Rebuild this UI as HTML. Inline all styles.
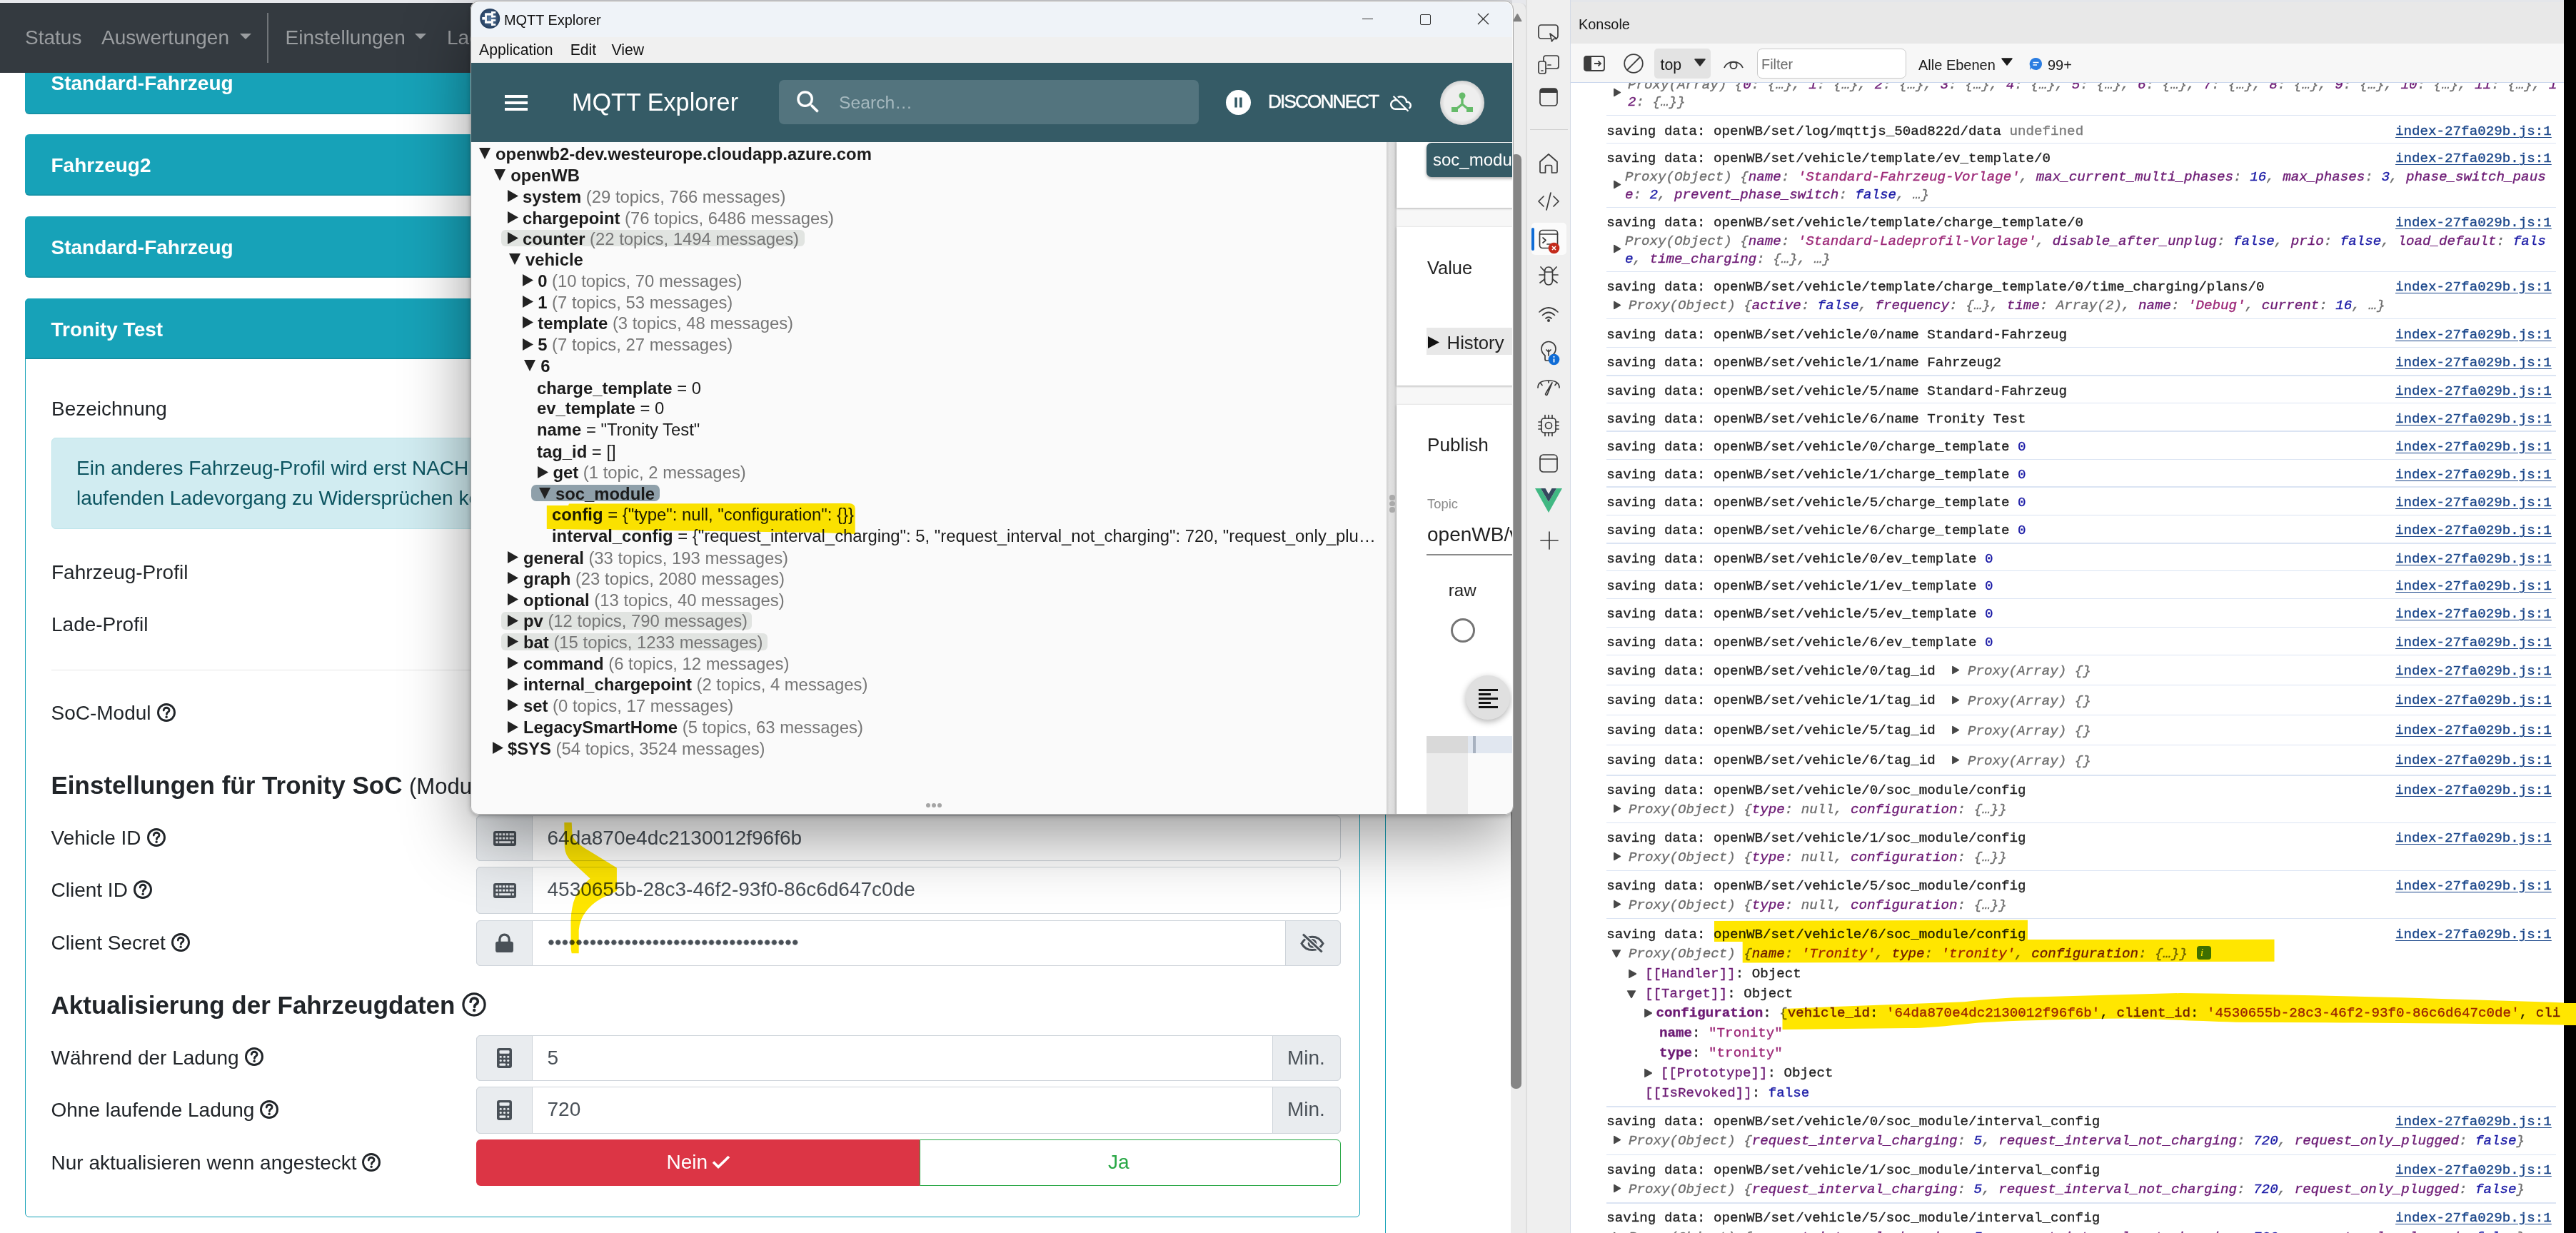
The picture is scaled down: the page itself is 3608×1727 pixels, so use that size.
<!DOCTYPE html>
<html lang="de"><head><meta charset="utf-8"><title>openWB Fahrzeug-Konfiguration – MQTT Explorer – DevTools</title>
<style>
html,body{margin:0;padding:0;width:3608px;height:1727px;overflow:hidden;background:#fff;font-family:"Liberation Sans",sans-serif;}
.a{position:absolute;white-space:pre;}
svg.a{overflow:visible}
</style></head><body>
<div class="a" style="left:0.0px;top:0.0px;width:3591.0px;height:4.0px;background:#e7e8ec;"></div>
<div class="a" style="left:35.0px;top:60.0px;width:1870.0px;height:99.5px;background:#17a2b8;border-radius:6px;box-shadow:inset 0 -1.5px 0 rgba(0,0,0,.13);"></div>
<div class="a" style="left:71.5px;top:98.7px;font-size:28px;line-height:35px;color:#fff;font-weight:700;">Standard-Fahrzeug</div>
<div class="a" style="left:35.0px;top:187.8px;width:1870.0px;height:86.7px;background:#17a2b8;border-radius:6px;box-shadow:inset 0 -1.5px 0 rgba(0,0,0,.13);"></div>
<div class="a" style="left:71.5px;top:214.3px;font-size:28px;line-height:35px;color:#fff;font-weight:700;">Fahrzeug2</div>
<div class="a" style="left:35.0px;top:303.0px;width:1870.0px;height:86.3px;background:#17a2b8;border-radius:6px;box-shadow:inset 0 -1.5px 0 rgba(0,0,0,.13);"></div>
<div class="a" style="left:71.5px;top:329.0px;font-size:28px;line-height:35px;color:#fff;font-weight:700;">Standard-Fahrzeug</div>
<div class="a" style="left:0.0px;top:4.0px;width:2116.0px;height:97.5px;background:#343a40;"></div>
<div class="a" style="left:35.0px;top:35.0px;font-size:28px;line-height:35px;color:#9a9da0;">Status</div>
<div class="a" style="left:142.0px;top:35.0px;font-size:28px;line-height:35px;color:#9a9da0;">Auswertungen</div>
<svg class="a" style="left:336px;top:47px" width="16" height="8"><path d="M0 0H16L8 8Z" fill="#9a9da0"/></svg>
<div class="a" style="left:374.0px;top:18.0px;width:1.5px;height:69.5px;background:rgba(255,255,255,.3);"></div>
<div class="a" style="left:399.6px;top:35.0px;font-size:28px;line-height:35px;color:#9a9da0;">Einstellungen</div>
<svg class="a" style="left:581px;top:47px" width="16" height="8"><path d="M0 0H16L8 8Z" fill="#9a9da0"/></svg>
<div class="a" style="left:626.0px;top:35.0px;font-size:28px;line-height:35px;color:#9a9da0;">Ladepunkte</div>
<div class="a" style="left:35.0px;top:417.7px;width:1870.0px;height:1287.3px;background:#fff;border:1.5px solid #17a2b8;border-radius:6px;box-sizing:border-box;"></div>
<div class="a" style="left:35.0px;top:417.7px;width:1870.0px;height:85.3px;background:#17a2b8;border-radius:6px 6px 0 0;box-shadow:inset 0 -1.5px 0 rgba(0,0,0,.13);"></div>
<div class="a" style="left:71.5px;top:443.5px;font-size:28px;line-height:35px;color:#fff;font-weight:700;">Tronity Test</div>
<div class="a" style="left:1939.5px;top:101.5px;width:1.5px;height:1625.5px;background:#17a2b8;"></div>
<div class="a" style="left:72.0px;top:554.6px;font-size:28px;line-height:35px;color:#212529;">Bezeichnung</div>
<div class="a" style="left:71.5px;top:613.0px;width:1796.5px;height:128.0px;background:#d1ecf1;border:1.5px solid #bee5eb;border-radius:6px;box-sizing:border-box;"></div>
<div class="a" style="left:107.0px;top:638.0px;font-size:28px;line-height:35px;color:#0c5460;">Ein anderes Fahrzeug-Profil wird erst NACH dem Abstecken übernommen, um</div>
<div class="a" style="left:107.0px;top:679.7px;font-size:28px;line-height:35px;color:#0c5460;">laufenden Ladevorgang zu Widersprüchen kommen kann.</div>
<div class="a" style="left:72.0px;top:784.4px;font-size:28px;line-height:35px;color:#212529;">Fahrzeug-Profil</div>
<div class="a" style="left:72.0px;top:857.4px;font-size:28px;line-height:35px;color:#212529;">Lade-Profil</div>
<div class="a" style="left:71.5px;top:937.5px;width:1796.5px;height:1.5px;background:rgba(0,0,0,.1);"></div>
<div class="a" style="left:71.5px;top:981.0px;font-size:28px;line-height:35px;color:#212529;">SoC-Modul</div>
<svg class="a" style="left:220.0px;top:985.0px" width="26" height="26" viewBox="0 0 16 16"><circle cx="8" cy="8" r="7.1" fill="none" stroke="#212529" stroke-width="1.78"/><path d="M5.7 6.2c0-1.4 1.05-2.35 2.4-2.35 1.4 0 2.4.9 2.4 2.1 0 1-.6 1.45-1.3 1.9-.6.4-.9.7-.9 1.4v.3" fill="none" stroke="#212529" stroke-width="1.75" stroke-linecap="round"/><circle cx="8.1" cy="11.8" r="1.05" fill="#212529"/></svg>
<div class="a" style="left:71.5px;top:1077.5px;font-size:35px;line-height:44px;color:#212529;font-weight:700;">Einstellungen für Tronity SoC</div>
<div class="a" style="left:573.0px;top:1082.0px;font-size:31px;line-height:39px;color:#212529;">(Modul: soc_tronity)</div>
<div class="a" style="left:71.5px;top:1156.0px;font-size:28px;line-height:35px;color:#212529;">Vehicle ID</div>
<svg class="a" style="left:206.0px;top:1159.5px" width="26" height="26" viewBox="0 0 16 16"><circle cx="8" cy="8" r="7.1" fill="none" stroke="#212529" stroke-width="1.78"/><path d="M5.7 6.2c0-1.4 1.05-2.35 2.4-2.35 1.4 0 2.4.9 2.4 2.1 0 1-.6 1.45-1.3 1.9-.6.4-.9.7-.9 1.4v.3" fill="none" stroke="#212529" stroke-width="1.75" stroke-linecap="round"/><circle cx="8.1" cy="11.8" r="1.05" fill="#212529"/></svg>
<div class="a" style="left:71.5px;top:1229.0px;font-size:28px;line-height:35px;color:#212529;">Client ID</div>
<svg class="a" style="left:187.0px;top:1233.0px" width="26" height="26" viewBox="0 0 16 16"><circle cx="8" cy="8" r="7.1" fill="none" stroke="#212529" stroke-width="1.78"/><path d="M5.7 6.2c0-1.4 1.05-2.35 2.4-2.35 1.4 0 2.4.9 2.4 2.1 0 1-.6 1.45-1.3 1.9-.6.4-.9.7-.9 1.4v.3" fill="none" stroke="#212529" stroke-width="1.75" stroke-linecap="round"/><circle cx="8.1" cy="11.8" r="1.05" fill="#212529"/></svg>
<div class="a" style="left:71.5px;top:1303.0px;font-size:28px;line-height:35px;color:#212529;">Client Secret</div>
<svg class="a" style="left:240.0px;top:1307.0px" width="26" height="26" viewBox="0 0 16 16"><circle cx="8" cy="8" r="7.1" fill="none" stroke="#212529" stroke-width="1.78"/><path d="M5.7 6.2c0-1.4 1.05-2.35 2.4-2.35 1.4 0 2.4.9 2.4 2.1 0 1-.6 1.45-1.3 1.9-.6.4-.9.7-.9 1.4v.3" fill="none" stroke="#212529" stroke-width="1.75" stroke-linecap="round"/><circle cx="8.1" cy="11.8" r="1.05" fill="#212529"/></svg>
<div class="a" style="left:71.5px;top:1385.9px;font-size:35px;line-height:44px;color:#212529;font-weight:700;">Aktualisierung der Fahrzeugdaten</div>
<svg class="a" style="left:646.5px;top:1389.5px" width="34" height="34" viewBox="0 0 16 16"><circle cx="8" cy="8" r="7.1" fill="none" stroke="#212529" stroke-width="1.51"/><path d="M5.7 6.2c0-1.4 1.05-2.35 2.4-2.35 1.4 0 2.4.9 2.4 2.1 0 1-.6 1.45-1.3 1.9-.6.4-.9.7-.9 1.4v.3" fill="none" stroke="#212529" stroke-width="1.75" stroke-linecap="round"/><circle cx="8.1" cy="11.8" r="1.05" fill="#212529"/></svg>
<div class="a" style="left:71.5px;top:1463.5px;font-size:28px;line-height:35px;color:#212529;">Während der Ladung</div>
<svg class="a" style="left:343.0px;top:1467.0px" width="26" height="26" viewBox="0 0 16 16"><circle cx="8" cy="8" r="7.1" fill="none" stroke="#212529" stroke-width="1.78"/><path d="M5.7 6.2c0-1.4 1.05-2.35 2.4-2.35 1.4 0 2.4.9 2.4 2.1 0 1-.6 1.45-1.3 1.9-.6.4-.9.7-.9 1.4v.3" fill="none" stroke="#212529" stroke-width="1.75" stroke-linecap="round"/><circle cx="8.1" cy="11.8" r="1.05" fill="#212529"/></svg>
<div class="a" style="left:71.5px;top:1537.0px;font-size:28px;line-height:35px;color:#212529;">Ohne laufende Ladung</div>
<svg class="a" style="left:364.0px;top:1541.0px" width="26" height="26" viewBox="0 0 16 16"><circle cx="8" cy="8" r="7.1" fill="none" stroke="#212529" stroke-width="1.78"/><path d="M5.7 6.2c0-1.4 1.05-2.35 2.4-2.35 1.4 0 2.4.9 2.4 2.1 0 1-.6 1.45-1.3 1.9-.6.4-.9.7-.9 1.4v.3" fill="none" stroke="#212529" stroke-width="1.75" stroke-linecap="round"/><circle cx="8.1" cy="11.8" r="1.05" fill="#212529"/></svg>
<div class="a" style="left:71.5px;top:1610.8px;font-size:28px;line-height:35px;color:#212529;">Nur aktualisieren wenn angesteckt</div>
<svg class="a" style="left:507.0px;top:1614.5px" width="26" height="26" viewBox="0 0 16 16"><circle cx="8" cy="8" r="7.1" fill="none" stroke="#212529" stroke-width="1.78"/><path d="M5.7 6.2c0-1.4 1.05-2.35 2.4-2.35 1.4 0 2.4.9 2.4 2.1 0 1-.6 1.45-1.3 1.9-.6.4-.9.7-.9 1.4v.3" fill="none" stroke="#212529" stroke-width="1.75" stroke-linecap="round"/><circle cx="8.1" cy="11.8" r="1.05" fill="#212529"/></svg>
<div class="a" style="left:667.0px;top:1142.0px;width:1210.5px;height:64.0px;background:#fff;border:1.5px solid #ced4da;border-radius:6px;box-sizing:border-box;"></div>
<div class="a" style="left:667.0px;top:1142.0px;width:79.0px;height:64.0px;background:#e9ecef;border:1.5px solid #ced4da;border-radius:6px 0 0 6px;box-sizing:border-box;"></div>
<div class="a" style="left:690.5px;top:1163.5px;line-height:0"><svg width="32" height="21" viewBox="0 0 16 10.5"><rect x="0" y="0" width="16" height="10.5" rx="1.6" fill="#495057"/><g fill="#e9ecef"><rect x="1.7" y="1.6" width="1.6" height="1.5"/><rect x="4.1" y="1.6" width="1.6" height="1.5"/><rect x="6.5" y="1.6" width="1.6" height="1.5"/><rect x="8.9" y="1.6" width="1.6" height="1.5"/><rect x="11.3" y="1.6" width="1.6" height="1.5"/><rect x="13.1" y="1.6" width="1.3" height="1.5"/><rect x="1.7" y="4.3" width="1.6" height="1.5"/><rect x="4.1" y="4.3" width="1.6" height="1.5"/><rect x="6.5" y="4.3" width="1.6" height="1.5"/><rect x="8.9" y="4.3" width="1.6" height="1.5"/><rect x="11.3" y="4.3" width="1.6" height="1.5"/><rect x="13.1" y="4.3" width="1.3" height="1.5"/><rect x="1.7" y="7.1" width="1.6" height="1.5"/><rect x="4.1" y="7.1" width="8.1" height="1.5"/><rect x="13.1" y="7.1" width="1.3" height="1.5"/></g></svg></div>
<div class="a" style="left:766.5px;top:1156.0px;font-size:28px;line-height:35px;color:#495057;">64da870e4dc2130012f96f6b</div>
<div class="a" style="left:667.0px;top:1214.4px;width:1210.5px;height:66.1px;background:#fff;border:1.5px solid #ced4da;border-radius:6px;box-sizing:border-box;"></div>
<div class="a" style="left:667.0px;top:1214.4px;width:79.0px;height:66.1px;background:#e9ecef;border:1.5px solid #ced4da;border-radius:6px 0 0 6px;box-sizing:border-box;"></div>
<div class="a" style="left:690.5px;top:1237.0px;line-height:0"><svg width="32" height="21" viewBox="0 0 16 10.5"><rect x="0" y="0" width="16" height="10.5" rx="1.6" fill="#495057"/><g fill="#e9ecef"><rect x="1.7" y="1.6" width="1.6" height="1.5"/><rect x="4.1" y="1.6" width="1.6" height="1.5"/><rect x="6.5" y="1.6" width="1.6" height="1.5"/><rect x="8.9" y="1.6" width="1.6" height="1.5"/><rect x="11.3" y="1.6" width="1.6" height="1.5"/><rect x="13.1" y="1.6" width="1.3" height="1.5"/><rect x="1.7" y="4.3" width="1.6" height="1.5"/><rect x="4.1" y="4.3" width="1.6" height="1.5"/><rect x="6.5" y="4.3" width="1.6" height="1.5"/><rect x="8.9" y="4.3" width="1.6" height="1.5"/><rect x="11.3" y="4.3" width="1.6" height="1.5"/><rect x="13.1" y="4.3" width="1.3" height="1.5"/><rect x="1.7" y="7.1" width="1.6" height="1.5"/><rect x="4.1" y="7.1" width="8.1" height="1.5"/><rect x="13.1" y="7.1" width="1.3" height="1.5"/></g></svg></div>
<div class="a" style="left:766.5px;top:1228.4px;font-size:28px;line-height:35px;color:#495057;">4530655b-28c3-46f2-93f0-86c6d647c0de</div>
<div class="a" style="left:667.0px;top:1288.5px;width:1210.5px;height:64.5px;background:#fff;border:1.5px solid #ced4da;border-radius:6px;box-sizing:border-box;"></div>
<div class="a" style="left:667.0px;top:1288.5px;width:79.0px;height:64.5px;background:#e9ecef;border:1.5px solid #ced4da;border-radius:6px 0 0 6px;box-sizing:border-box;"></div>
<div class="a" style="left:694.0px;top:1307.2px;line-height:0"><svg width="25" height="27" viewBox="0 0 12 13"><path d="M2.8 6V4.2a3.2 3.2 0 0 1 6.4 0V6" fill="none" stroke="#495057" stroke-width="1.6"/><rect x="0" y="5.6" width="12" height="7.4" rx="1.5" fill="#495057"/></svg></div>
<div class="a" style="left:767px;top:1314.3px;width:351px;height:12px;background:radial-gradient(circle at 4.9px 6px,#495057 3.3px,transparent 3.9px) 0 0/9.77px 12px repeat-x"></div>
<div class="a" style="left:1800.0px;top:1288.5px;width:77.5px;height:64.5px;background:#e9ecef;border:1.5px solid #ced4da;border-radius:0 6px 6px 0;box-sizing:border-box;"></div>
<div class="a" style="left:1820.0px;top:1306.8px;line-height:0"><svg width="36" height="28" viewBox="0 0 18 14"><path d="M1.5 7.2C3.2 4.2 5.8 2.6 9 2.6s5.8 1.6 7.5 4.6c-1.7 3-4.3 4.6-7.5 4.6S3.2 10.2 1.5 7.2Z" fill="none" stroke="#495057" stroke-width="1.5"/><circle cx="9" cy="7.2" r="2.4" fill="none" stroke="#495057" stroke-width="1.5"/><path d="M2.5 .8 15.8 13.2" stroke="#e9ecef" stroke-width="3"/><path d="M2.5 .8 15.8 13.2" stroke="#495057" stroke-width="1.5"/></svg></div>
<div class="a" style="left:667.0px;top:1449.5px;width:1210.5px;height:64.5px;background:#fff;border:1.5px solid #ced4da;border-radius:6px;box-sizing:border-box;"></div>
<div class="a" style="left:667.0px;top:1449.5px;width:79.0px;height:64.5px;background:#e9ecef;border:1.5px solid #ced4da;border-radius:6px 0 0 6px;box-sizing:border-box;"></div>
<div class="a" style="left:696.0px;top:1467.8px;line-height:0"><svg width="21" height="28" viewBox="0 0 12 16"><rect x="0" y="0" width="12" height="16" rx="1.8" fill="#495057"/><g fill="#e9ecef"><rect x="2" y="1.8" width="8" height="2.6" rx=".6"/><circle cx="3" cy="7" r=".9"/><circle cx="6" cy="7" r=".9"/><circle cx="9" cy="7" r=".9"/><circle cx="3" cy="10" r=".9"/><circle cx="6" cy="10" r=".9"/><circle cx="9" cy="10" r=".9"/><rect x="2" y="12.3" width="5" height="1.8" rx=".6"/><circle cx="9" cy="13.2" r=".9"/></g></svg></div>
<div class="a" style="left:766.5px;top:1463.5px;font-size:28px;line-height:35px;color:#495057;">5</div>
<div class="a" style="left:1782.0px;top:1449.5px;width:95.5px;height:64.5px;background:#e9ecef;border:1.5px solid #ced4da;border-radius:0 6px 6px 0;box-sizing:border-box;"></div>
<div class="a" style="left:1803.0px;top:1463.5px;font-size:28px;line-height:35px;color:#495057;">Min.</div>
<div class="a" style="left:667.0px;top:1522.3px;width:1210.5px;height:65.7px;background:#fff;border:1.5px solid #ced4da;border-radius:6px;box-sizing:border-box;"></div>
<div class="a" style="left:667.0px;top:1522.3px;width:79.0px;height:65.7px;background:#e9ecef;border:1.5px solid #ced4da;border-radius:6px 0 0 6px;box-sizing:border-box;"></div>
<div class="a" style="left:696.0px;top:1541.2px;line-height:0"><svg width="21" height="28" viewBox="0 0 12 16"><rect x="0" y="0" width="12" height="16" rx="1.8" fill="#495057"/><g fill="#e9ecef"><rect x="2" y="1.8" width="8" height="2.6" rx=".6"/><circle cx="3" cy="7" r=".9"/><circle cx="6" cy="7" r=".9"/><circle cx="9" cy="7" r=".9"/><circle cx="3" cy="10" r=".9"/><circle cx="6" cy="10" r=".9"/><circle cx="9" cy="10" r=".9"/><rect x="2" y="12.3" width="5" height="1.8" rx=".6"/><circle cx="9" cy="13.2" r=".9"/></g></svg></div>
<div class="a" style="left:766.5px;top:1536.3px;font-size:28px;line-height:35px;color:#495057;">720</div>
<div class="a" style="left:1782.0px;top:1522.3px;width:95.5px;height:65.7px;background:#e9ecef;border:1.5px solid #ced4da;border-radius:0 6px 6px 0;box-sizing:border-box;"></div>
<div class="a" style="left:1803.0px;top:1536.3px;font-size:28px;line-height:35px;color:#495057;">Min.</div>
<div class="a" style="left:667.0px;top:1596.0px;width:621.0px;height:64.5px;background:#dc3545;border-radius:6px 0 0 6px;"></div>
<div class="a" style="left:933.5px;top:1609.7px;font-size:28px;line-height:35px;color:#fff;">Nein</div>
<svg class="a" style="left:997px;top:1618px" width="26" height="19" viewBox="0 0 26 19"><path d="M2 9.5 9 16.5 24 2" fill="none" stroke="#fff" stroke-width="3.6"/></svg>
<div class="a" style="left:1288.0px;top:1596.0px;width:589.5px;height:64.5px;background:#fff;border:1.5px solid #28a745;border-radius:0 6px 6px 0;box-sizing:border-box;"></div>
<div class="a" style="left:1552.0px;top:1609.7px;font-size:28px;line-height:35px;color:#28a745;">Ja</div>
<svg class="a" style="left:0;top:0;mix-blend-mode:multiply" width="3608" height="1727"><path d="M790.3 1152 L790.8 1186.5 Q791.5 1198 800 1206 L826.5 1230.6 Q812 1243 806 1256 Q800 1270 799.5 1290 L799.6 1329.4 L800.7 1335.2 L810.7 1335.2 L810.7 1302.8 Q812 1288 819.9 1277.9 Q830 1264 846.4 1256.3 L863.9 1248 L863.9 1215.6 L824.8 1191.5 Q805 1180 801.6 1169.9 L800.7 1152 Z" fill="#ffe600"/></svg>
<div class="a" style="left:2100.0px;top:0.0px;width:40.0px;height:20.0px;background:#e7e8ec;"></div>
<div class="a" style="left:2116.0px;top:4.0px;width:22.7px;height:1723.0px;background:#ececec;border-right:2px solid #d8d8d8;border-radius:0 10px 0 0;box-sizing:border-box;"></div>
<div class="a" style="left:2116.3px;top:216.0px;width:14.7px;height:1308.5px;background:#858585;border-radius:7px;"></div>
<svg class="a" style="left:2117.5px;top:17.5px" width="15" height="13"><path d="M2 12.2H12.6Q14 12.2 13.3 11L8.5 2.2Q7.3 .4 6.1 2.2L1.3 11Q.6 12.2 2 12.2Z" fill="#808080"/></svg>
<div class="a" style="left:0;top:0;width:2118px;height:1727px;overflow:hidden"><div class="a" style="left:658.5px;top:1px;width:1461.1999999999998px;height:1140px;border-radius:12px;background:#fafafa;box-shadow:0 30px 95px rgba(0,0,0,.42),0 2px 6px rgba(0,0,0,.25)"></div></div>
<div class="a" style="left:658.5px;top:1.0px;width:1461.2px;height:1140.0px;background:#fafafa;border-radius:12px;border:1.5px solid #a6a6a6;box-sizing:border-box;"></div>
<div class="a" style="left:660.0px;top:2.5px;width:1458.1999999999998px;height:1137px;border-radius:10.5px;overflow:hidden">
<div class="a" style="left:0.0px;top:0.0px;width:1459.7px;height:49.5px;background:#eff3f8;"></div>
<svg class="a" style="left:11.5px;top:9.5px" width="29" height="29" viewBox="0 0 29 29"><defs><radialGradient id="ig" cx=".5" cy=".5" r=".55"><stop offset="0" stop-color="#5b7ea6"/><stop offset="1" stop-color="#1e3656"/></radialGradient></defs><circle cx="14.2" cy="14" r="14" fill="url(#ig)"/><g fill="#fff"><rect x="3.3" y="12" width="4.2" height="3.6"/><rect x="7.2" y="7.6" width="2.7" height="12.4"/><rect x="7.2" y="6.3" width="9.3" height="3.3"/><rect x="7.2" y="17.4" width="9.3" height="3.3"/><rect x="16.1" y="4.1" width="2.6" height="8.3"/><rect x="16.1" y="4.1" width="6.2" height="2.6"/><rect x="16.1" y="9.8" width="6.2" height="2.6"/><rect x="16.1" y="15.1" width="2.6" height="8.8"/><rect x="16.1" y="15.1" width="6.2" height="2.6"/><rect x="16.1" y="21.2" width="6.2" height="2.6"/></g></svg>
<div class="a" style="left:46.0px;top:13.5px;font-size:19.9px;line-height:25px;color:#111;">MQTT Explorer</div>
<div class="a" style="left:1248.0px;top:23.5px;width:15.0px;height:1.3px;background:#333;"></div>
<div class="a" style="left:1328.5px;top:17.0px;width:15.5px;height:15.5px;background:transparent;border:1.4px solid #333;border-radius:2px;box-sizing:border-box;"></div>
<svg class="a" style="left:1409.0px;top:15.5px" width="17" height="17"><path d="M1 1L16 16M16 1L1 16" stroke="#333" stroke-width="1.4"/></svg>
<div class="a" style="left:0.0px;top:49.5px;width:1459.7px;height:35.5px;background:#f0f0f0;"></div>
<div class="a" style="left:11.0px;top:54.0px;font-size:21.2px;line-height:26px;color:#111;">Application</div>
<div class="a" style="left:138.7px;top:54.0px;font-size:21.2px;line-height:26px;color:#111;">Edit</div>
<div class="a" style="left:196.5px;top:54.0px;font-size:21.2px;line-height:26px;color:#111;">View</div>
<div class="a" style="left:0.0px;top:85.0px;width:1459.7px;height:111.5px;background:#355b66;"></div>
<div class="a" style="left:47.0px;top:130.5px;width:32.0px;height:3.6px;background:#fff;"></div>
<div class="a" style="left:47.0px;top:139.5px;width:32.0px;height:3.6px;background:#fff;"></div>
<div class="a" style="left:47.0px;top:148.5px;width:32.0px;height:3.6px;background:#fff;"></div>
<div class="a" style="left:141.0px;top:119.0px;font-size:34.2px;line-height:43px;color:#fff;">MQTT Explorer</div>
<div class="a" style="left:431.0px;top:109.5px;width:587.5px;height:62.0px;background:#53747e;border-radius:7px;"></div>
<svg class="a" style="left:451.0px;top:119.5px" width="42" height="42" viewBox="0 0 24 24"><path d="M15.5 14h-.79l-.28-.27A6.47 6.47 0 0 0 16 9.5 6.5 6.5 0 1 0 9.5 16c1.61 0 3.09-.59 4.23-1.57l.27.28v.79l5 4.99L20.49 19l-4.99-5zm-6 0C7.01 14 5 11.99 5 9.5S7.01 5 9.5 5 14 7.01 14 9.5 11.99 14 9.5 14z" fill="#fff"/></svg>
<div class="a" style="left:515.0px;top:125.0px;font-size:24.7px;line-height:31px;color:#a6b9bf;">Search…</div>
<svg class="a" style="left:1057.0px;top:123.0px" width="35" height="35" viewBox="0 0 35 35"><circle cx="17.5" cy="17.5" r="17.5" fill="#fff"/><rect x="12.3" y="10.5" width="3.6" height="14" fill="#355b66"/><rect x="19.1" y="10.5" width="3.6" height="14" fill="#355b66"/></svg>
<div class="a" style="left:1116.0px;top:123.7px;font-size:26px;line-height:32px;color:#fff;letter-spacing:-1.75px;-webkit-text-stroke:.5px #fff;">DISCONNECT</div>
<svg class="a" style="left:1286.5px;top:126.0px" width="30" height="30" viewBox="0 0 24 24"><path d="M19.35 10.04A7.49 7.49 0 0 0 12 4c-1.48 0-2.85.43-4.01 1.17l1.46 1.46A5.497 5.497 0 0 1 17.5 11.5v.5H19c1.66 0 3 1.34 3 3 0 1.13-.64 2.11-1.56 2.62l1.45 1.45C23.16 18.16 24 16.68 24 15c0-2.64-2.05-4.78-4.65-4.96zM3 5.27l2.75 2.74C2.56 8.15 0 10.77 0 14c0 3.31 2.69 6 6 6h11.73l2 2L21 20.73 4.27 4 3 5.27zM7.73 10l8 8H6c-2.21 0-4-1.79-4-4s1.79-4 4-4h1.73z" fill="#fff"/></svg>
<svg class="a" style="left:1357.0px;top:110.0px" width="62" height="62" viewBox="0 0 62 62"><defs><radialGradient id="av" r=".5"><stop offset=".8" stop-color="#eeeeee"/><stop offset="1" stop-color="#d2d2d2"/></radialGradient></defs><circle cx="31" cy="31" r="31" fill="url(#av)"/><g fill="#66bb6a" stroke="#66bb6a"><circle cx="31" cy="21" r="4.5" stroke="none"/><path d="M31 23V33M31 33L21 41M31 33L41 41" stroke-width="3.4" fill="none"/><rect x="16" y="37" width="9" height="7" stroke="none"/><rect x="37" y="37" width="9" height="7" stroke="none"/></g></svg>
<div class="a" style="left:0.0px;top:196.5px;width:1282.0px;height:942.0px;background:#fafafa;"></div>
<div class="a" style="left:1282.0px;top:196.5px;width:14.0px;height:942.0px;background:linear-gradient(90deg,#cfcfcf,#e2e2e2 30%,#dcdcdc 70%,#c9c9c9);"></div>
<div class="a" style="left:1286.4px;top:690.9px;width:7.2px;height:7.2px;border-radius:50%;background:#aaa"></div>
<div class="a" style="left:1286.4px;top:699.5px;width:7.2px;height:7.2px;border-radius:50%;background:#aaa"></div>
<div class="a" style="left:1286.4px;top:707.9px;width:7.2px;height:7.2px;border-radius:50%;background:#aaa"></div>
<div class="a" style="left:42.0px;top:319.5px;width:424.6px;height:23.3px;background:#e1e4e1;border-radius:6px;"></div>
<div class="a" style="left:42.0px;top:854.9px;width:351.4px;height:24.4px;background:#e1e4e1;border-radius:6px;"></div>
<div class="a" style="left:42.0px;top:884.5px;width:372.6px;height:23.8px;background:#e1e4e1;border-radius:6px;"></div>
<div class="a" style="left:84.0px;top:676.8px;width:179.5px;height:22.7px;background:#8fa0aa;border-radius:7px;"></div>
<svg class="a" style="left:10.9px;top:204.5px" width="16" height="16" viewBox="0 0 10 10" preserveAspectRatio="none"><path d="M0 0L10 0L5 10Z" fill="#222"/></svg>
<div class="a" style="left:34.0px;top:198.5px;font-size:23.85px;line-height:30px;color:#1b1b1b;font-weight:700;">openwb2-dev.westeurope.cloudapp.azure.com</div>
<svg class="a" style="left:31.5px;top:234.3px" width="16" height="16" viewBox="0 0 10 10" preserveAspectRatio="none"><path d="M0 0L10 0L5 10Z" fill="#222"/></svg>
<div class="a" style="left:55.2px;top:228.3px;font-size:23.85px;line-height:30px;color:#1b1b1b;font-weight:700;">openWB</div>
<svg class="a" style="left:51.0px;top:263.8px" width="15" height="17" viewBox="0 0 10 10" preserveAspectRatio="none"><path d="M0 0L10 5L0 10Z" fill="#222"/></svg>
<div class="a" style="left:72.0px;top:258.3px;font-size:23.85px;line-height:30px;color:#1b1b1b;font-weight:700;">system</div>
<div class="a" style="left:154.2px;top:258.3px;font-size:23.85px;line-height:30px;color:#767676;"> (29 topics, 766 messages)</div>
<svg class="a" style="left:51.0px;top:293.6px" width="15" height="17" viewBox="0 0 10 10" preserveAspectRatio="none"><path d="M0 0L10 5L0 10Z" fill="#222"/></svg>
<div class="a" style="left:72.0px;top:288.1px;font-size:23.85px;line-height:30px;color:#1b1b1b;font-weight:700;">chargepoint</div>
<div class="a" style="left:208.5px;top:288.1px;font-size:23.85px;line-height:30px;color:#767676;"> (76 topics, 6486 messages)</div>
<svg class="a" style="left:51.0px;top:322.8px" width="15" height="17" viewBox="0 0 10 10" preserveAspectRatio="none"><path d="M0 0L10 5L0 10Z" fill="#222"/></svg>
<div class="a" style="left:72.0px;top:317.3px;font-size:23.85px;line-height:30px;color:#1b1b1b;font-weight:700;">counter</div>
<div class="a" style="left:159.5px;top:317.3px;font-size:23.85px;line-height:30px;color:#767676;"> (22 topics, 1494 messages)</div>
<svg class="a" style="left:52.5px;top:352.6px" width="16" height="16" viewBox="0 0 10 10" preserveAspectRatio="none"><path d="M0 0L10 0L5 10Z" fill="#222"/></svg>
<div class="a" style="left:76.0px;top:346.6px;font-size:23.85px;line-height:30px;color:#1b1b1b;font-weight:700;">vehicle</div>
<svg class="a" style="left:72.0px;top:381.8px" width="15" height="17" viewBox="0 0 10 10" preserveAspectRatio="none"><path d="M0 0L10 5L0 10Z" fill="#222"/></svg>
<div class="a" style="left:93.2px;top:376.3px;font-size:23.85px;line-height:30px;color:#1b1b1b;font-weight:700;">0</div>
<div class="a" style="left:106.5px;top:376.3px;font-size:23.85px;line-height:30px;color:#767676;"> (10 topics, 70 messages)</div>
<svg class="a" style="left:72.0px;top:411.8px" width="15" height="17" viewBox="0 0 10 10" preserveAspectRatio="none"><path d="M0 0L10 5L0 10Z" fill="#222"/></svg>
<div class="a" style="left:93.2px;top:406.3px;font-size:23.85px;line-height:30px;color:#1b1b1b;font-weight:700;">1</div>
<div class="a" style="left:106.5px;top:406.3px;font-size:23.85px;line-height:30px;color:#767676;"> (7 topics, 53 messages)</div>
<svg class="a" style="left:72.0px;top:440.8px" width="15" height="17" viewBox="0 0 10 10" preserveAspectRatio="none"><path d="M0 0L10 5L0 10Z" fill="#222"/></svg>
<div class="a" style="left:93.2px;top:435.3px;font-size:23.85px;line-height:30px;color:#1b1b1b;font-weight:700;">template</div>
<div class="a" style="left:191.3px;top:435.3px;font-size:23.85px;line-height:30px;color:#767676;"> (3 topics, 48 messages)</div>
<svg class="a" style="left:72.0px;top:471.3px" width="15" height="17" viewBox="0 0 10 10" preserveAspectRatio="none"><path d="M0 0L10 5L0 10Z" fill="#222"/></svg>
<div class="a" style="left:93.2px;top:465.8px;font-size:23.85px;line-height:30px;color:#1b1b1b;font-weight:700;">5</div>
<div class="a" style="left:106.5px;top:465.8px;font-size:23.85px;line-height:30px;color:#767676;"> (7 topics, 27 messages)</div>
<svg class="a" style="left:74.2px;top:501.8px" width="16" height="16" viewBox="0 0 10 10" preserveAspectRatio="none"><path d="M0 0L10 0L5 10Z" fill="#222"/></svg>
<div class="a" style="left:97.3px;top:495.8px;font-size:23.85px;line-height:30px;color:#1b1b1b;font-weight:700;">6</div>
<div class="a" style="left:92.0px;top:526.7px;font-size:23.85px;line-height:30px;color:#1b1b1b;white-space:pre"><b>charge_template</b> = 0</div>
<div class="a" style="left:92.0px;top:554.6px;font-size:23.85px;line-height:30px;color:#1b1b1b;white-space:pre"><b>ev_template</b> = 0</div>
<div class="a" style="left:92.0px;top:584.6px;font-size:23.85px;line-height:30px;color:#1b1b1b;white-space:pre"><b>name</b> = "Tronity Test"</div>
<div class="a" style="left:92.0px;top:615.0px;font-size:23.85px;line-height:30px;color:#1b1b1b;white-space:pre"><b>tag_id</b> = []</div>
<svg class="a" style="left:93.0px;top:650.2px" width="15" height="17" viewBox="0 0 10 10" preserveAspectRatio="none"><path d="M0 0L10 5L0 10Z" fill="#222"/></svg>
<div class="a" style="left:114.4px;top:644.7px;font-size:23.85px;line-height:30px;color:#1b1b1b;font-weight:700;">get</div>
<div class="a" style="left:150.2px;top:644.7px;font-size:23.85px;line-height:30px;color:#767676;"> (1 topic, 2 messages)</div>
<svg class="a" style="left:94.5px;top:680.6px" width="16" height="16" viewBox="0 0 10 10" preserveAspectRatio="none"><path d="M0 0L10 0L5 10Z" fill="#222"/></svg>
<div class="a" style="left:118.0px;top:674.6px;font-size:23.85px;line-height:30px;color:#1b1b1b;font-weight:700;">soc_module</div>
<div class="a" style="left:113.0px;top:703.8px;font-size:23.85px;line-height:30px;color:#1b1b1b;white-space:pre"><b>config</b> = {"type": null, "configuration": {}}</div>
<svg class="a" style="left:-660.0px;top:-2.5px;mix-blend-mode:multiply" width="2000" height="800"><path d="M765.8 708 L796 708 L797 705.6 L1190 705 Q1197.7 706 1197.7 712 L1197.7 748 L1150 746 L765.8 741 Z" fill="#ffe600"/></svg>
<div class="a" style="left:113.0px;top:733.0px;width:1156px;overflow:hidden;text-overflow:ellipsis;font-size:23.85px;line-height:30px;color:#1b1b1b;white-space:pre"><b>interval_config</b> = {"request_interval_charging": 5, "request_interval_not_charging": 720, "request_only_plugged": false}</div>
<svg class="a" style="left:50.6px;top:769.8px" width="15" height="17" viewBox="0 0 10 10" preserveAspectRatio="none"><path d="M0 0L10 5L0 10Z" fill="#222"/></svg>
<div class="a" style="left:73.0px;top:764.3px;font-size:23.85px;line-height:30px;color:#1b1b1b;font-weight:700;">general</div>
<div class="a" style="left:157.8px;top:764.3px;font-size:23.85px;line-height:30px;color:#767676;"> (33 topics, 193 messages)</div>
<svg class="a" style="left:50.6px;top:798.8px" width="15" height="17" viewBox="0 0 10 10" preserveAspectRatio="none"><path d="M0 0L10 5L0 10Z" fill="#222"/></svg>
<div class="a" style="left:73.0px;top:793.3px;font-size:23.85px;line-height:30px;color:#1b1b1b;font-weight:700;">graph</div>
<div class="a" style="left:139.3px;top:793.3px;font-size:23.85px;line-height:30px;color:#767676;"> (23 topics, 2080 messages)</div>
<svg class="a" style="left:50.6px;top:828.6px" width="15" height="17" viewBox="0 0 10 10" preserveAspectRatio="none"><path d="M0 0L10 5L0 10Z" fill="#222"/></svg>
<div class="a" style="left:73.0px;top:823.1px;font-size:23.85px;line-height:30px;color:#1b1b1b;font-weight:700;">optional</div>
<div class="a" style="left:165.7px;top:823.1px;font-size:23.85px;line-height:30px;color:#767676;"> (13 topics, 40 messages)</div>
<svg class="a" style="left:50.6px;top:858.3px" width="15" height="17" viewBox="0 0 10 10" preserveAspectRatio="none"><path d="M0 0L10 5L0 10Z" fill="#222"/></svg>
<div class="a" style="left:73.0px;top:852.8px;font-size:23.85px;line-height:30px;color:#1b1b1b;font-weight:700;">pv</div>
<div class="a" style="left:100.8px;top:852.8px;font-size:23.85px;line-height:30px;color:#767676;"> (12 topics, 790 messages)</div>
<svg class="a" style="left:50.6px;top:887.8px" width="15" height="17" viewBox="0 0 10 10" preserveAspectRatio="none"><path d="M0 0L10 5L0 10Z" fill="#222"/></svg>
<div class="a" style="left:73.0px;top:882.3px;font-size:23.85px;line-height:30px;color:#1b1b1b;font-weight:700;">bat</div>
<div class="a" style="left:108.8px;top:882.3px;font-size:23.85px;line-height:30px;color:#767676;"> (15 topics, 1233 messages)</div>
<svg class="a" style="left:50.6px;top:917.6px" width="15" height="17" viewBox="0 0 10 10" preserveAspectRatio="none"><path d="M0 0L10 5L0 10Z" fill="#222"/></svg>
<div class="a" style="left:73.0px;top:912.1px;font-size:23.85px;line-height:30px;color:#1b1b1b;font-weight:700;">command</div>
<div class="a" style="left:185.6px;top:912.1px;font-size:23.85px;line-height:30px;color:#767676;"> (6 topics, 12 messages)</div>
<svg class="a" style="left:50.6px;top:947.2px" width="15" height="17" viewBox="0 0 10 10" preserveAspectRatio="none"><path d="M0 0L10 5L0 10Z" fill="#222"/></svg>
<div class="a" style="left:73.0px;top:941.7px;font-size:23.85px;line-height:30px;color:#1b1b1b;font-weight:700;">internal_chargepoint</div>
<div class="a" style="left:308.9px;top:941.7px;font-size:23.85px;line-height:30px;color:#767676;"> (2 topics, 4 messages)</div>
<svg class="a" style="left:50.6px;top:976.8px" width="15" height="17" viewBox="0 0 10 10" preserveAspectRatio="none"><path d="M0 0L10 5L0 10Z" fill="#222"/></svg>
<div class="a" style="left:73.0px;top:971.3px;font-size:23.85px;line-height:30px;color:#1b1b1b;font-weight:700;">set</div>
<div class="a" style="left:107.5px;top:971.3px;font-size:23.85px;line-height:30px;color:#767676;"> (0 topics, 17 messages)</div>
<svg class="a" style="left:50.6px;top:1007.2px" width="15" height="17" viewBox="0 0 10 10" preserveAspectRatio="none"><path d="M0 0L10 5L0 10Z" fill="#222"/></svg>
<div class="a" style="left:73.0px;top:1001.7px;font-size:23.85px;line-height:30px;color:#1b1b1b;font-weight:700;">LegacySmartHome</div>
<div class="a" style="left:289.1px;top:1001.7px;font-size:23.85px;line-height:30px;color:#767676;"> (5 topics, 63 messages)</div>
<svg class="a" style="left:29.7px;top:1036.8px" width="15" height="17" viewBox="0 0 10 10" preserveAspectRatio="none"><path d="M0 0L10 5L0 10Z" fill="#222"/></svg>
<div class="a" style="left:51.0px;top:1031.3px;font-size:23.85px;line-height:30px;color:#1b1b1b;font-weight:700;">$SYS</div>
<div class="a" style="left:112.0px;top:1031.3px;font-size:23.85px;line-height:30px;color:#767676;"> (54 topics, 3524 messages)</div>
<div class="a" style="left:637.0px;top:1122.5px;width:6px;height:6px;border-radius:50%;background:#a5a5a5"></div>
<div class="a" style="left:645.0px;top:1122.5px;width:6px;height:6px;border-radius:50%;background:#a5a5a5"></div>
<div class="a" style="left:653.0px;top:1122.5px;width:6px;height:6px;border-radius:50%;background:#a5a5a5"></div>
<div class="a" style="left:1296.0px;top:196.5px;width:163.7px;height:942.0px;background:#f7f7f7;"></div>
<div class="a" style="left:1296.0px;top:196.5px;width:163.7px;height:92.0px;background:#fff;box-shadow:0 1px 3px rgba(0,0,0,.3);"></div>
<div class="a" style="left:1338.0px;top:197.5px;width:142.0px;height:48.0px;background:#355b66;border-radius:7px;box-shadow:0 2px 4px rgba(0,0,0,.35);"></div>
<div class="a" style="left:1347.0px;top:206.3px;font-size:24px;line-height:30px;color:#fff;">soc_module</div>
<div class="a" style="left:1296.0px;top:315.5px;width:163.7px;height:221.5px;background:#fff;box-shadow:0 1px 3px rgba(0,0,0,.3);"></div>
<div class="a" style="left:1339.0px;top:356.5px;font-size:25.4px;line-height:32px;color:#222;">Value</div>
<div class="a" style="left:1338.0px;top:456.5px;width:121.7px;height:38.0px;background:#e8e8e8;"></div>
<svg class="a" style="left:1340.0px;top:468.5px" width="16" height="17" viewBox="0 0 10 10" preserveAspectRatio="none"><path d="M0 0L10 5L0 10Z" fill="#111"/></svg>
<div class="a" style="left:1366.6px;top:461.0px;font-size:25.7px;line-height:32px;color:#222;">History</div>
<div class="a" style="left:1296.0px;top:564.9px;width:163.7px;height:573.6px;background:#fff;box-shadow:0 1px 3px rgba(0,0,0,.3);"></div>
<div class="a" style="left:1339.0px;top:604.8px;font-size:26.2px;line-height:33px;color:#222;">Publish</div>
<div class="a" style="left:1339.0px;top:691.5px;font-size:18.4px;line-height:23px;color:#8a8a8a;">Topic</div>
<div class="a" style="left:1339.0px;top:728.9px;font-size:28px;line-height:35px;color:#222;">openWB/vehicle/6/soc_module/config</div>
<div class="a" style="left:1338.0px;top:773.5px;width:121.7px;height:2.2px;background:#8a8a8a;"></div>
<div class="a" style="left:1368.8px;top:809.5px;font-size:24.2px;line-height:30px;color:#222;">raw</div>
<div class="a" style="left:1372.0px;top:863.1px;width:34px;height:34px;border-radius:50%;border:3.2px solid #757575;box-sizing:border-box"></div>
<div class="a" style="left:1393.0px;top:943.5px;width:62px;height:62px;border-radius:50%;background:#e0e0e0;box-shadow:0 3px 10px rgba(0,0,0,.3)"></div>
<div class="a" style="left:1411.0px;top:962.0px;width:27.0px;height:3.0px;background:#111;"></div>
<div class="a" style="left:1411.0px;top:968.0px;width:17.0px;height:3.0px;background:#111;"></div>
<div class="a" style="left:1411.0px;top:974.0px;width:27.0px;height:3.0px;background:#111;"></div>
<div class="a" style="left:1411.0px;top:980.0px;width:17.0px;height:3.0px;background:#111;"></div>
<div class="a" style="left:1411.0px;top:986.0px;width:27.0px;height:3.0px;background:#111;"></div>
<div class="a" style="left:1338.0px;top:1028.5px;width:58.0px;height:110.0px;background:#ebebeb;"></div>
<div class="a" style="left:1338.0px;top:1028.5px;width:58.0px;height:24.0px;background:#d9d9d9;"></div>
<div class="a" style="left:1396.0px;top:1028.5px;width:63.7px;height:24.0px;background:#e1e7f0;"></div>
<div class="a" style="left:1403.0px;top:1028.5px;width:3.5px;height:24.0px;background:#a8b2c0;"></div>
<div class="a" style="left:1396.0px;top:1052.5px;width:63.7px;height:86.0px;background:#fafafa;"></div>
</div>
<div class="a" style="left:2137.0px;top:0.0px;width:63.0px;height:1727.0px;background:#efefef;border-right:1.3px solid #d5dbe6;box-sizing:border-box;"></div>
<div class="a" style="left:2137.0px;top:0.0px;width:2.0px;height:1727.0px;background:#dedede;"></div>
<div class="a" style="left:2200.0px;top:0.0px;width:1391.0px;height:61.0px;background:#e8e8e8;"></div>
<div class="a" style="left:2200.0px;top:0.0px;width:1391.0px;height:3.0px;background:#e4e6ea;"></div>
<div class="a" style="left:2211.0px;top:21.9px;font-size:19.9px;line-height:25px;color:#1b1b1b;">Konsole</div>
<div class="a" style="left:2200.0px;top:61.0px;width:1391.0px;height:55.0px;background:#f7f7f7;border-bottom:1.3px solid #c9d6ec;box-sizing:border-box;"></div>
<div class="a" style="left:2200.0px;top:116.0px;width:1391.0px;height:1611.0px;background:#fff;"></div>
<svg class="a" style="left:2218px;top:78px" width="30" height="22" viewBox="0 0 30 22"><rect x="1" y="1" width="28" height="20" rx="3" fill="none" stroke="#3d3d3d" stroke-width="1.8"/><path d="M1 4Q1 1 4 1H11V21H4Q1 21 1 18Z" fill="#3d3d3d"/><path d="M15 11H24M20.5 7.5 24 11 20.5 14.5" fill="none" stroke="#3d3d3d" stroke-width="1.8"/></svg>
<svg class="a" style="left:2274px;top:75px" width="28" height="28" viewBox="0 0 28 28"><circle cx="14" cy="14" r="12.8" fill="none" stroke="#3d3d3d" stroke-width="1.8"/><path d="M5 23 23 5" stroke="#3d3d3d" stroke-width="1.8"/></svg>
<div class="a" style="left:2317.0px;top:68.0px;width:79.0px;height:41.5px;background:#e3e3e3;border-radius:5px;"></div>
<div class="a" style="left:2325.5px;top:78.0px;font-size:21.3px;line-height:27px;color:#1b1b1b;">top</div>
<svg class="a" style="left:2373px;top:82px" width="16" height="11"><path d="M1 1H15L8 10Z" fill="#2b2b2b" stroke="#2b2b2b" stroke-linejoin="round" stroke-width="1.5"/></svg>
<svg class="a" style="left:2413px;top:79px" width="30" height="20" viewBox="0 0 30 20"><path d="M2 16C6 5 24 5 28 16" fill="none" stroke="#3d3d3d" stroke-width="1.8"/><circle cx="15" cy="12.5" r="4.6" fill="none" stroke="#3d3d3d" stroke-width="1.8"/></svg>
<div class="a" style="left:2461.0px;top:68.0px;width:209.0px;height:41.5px;background:#fff;border:1.3px solid #c8c8c8;border-radius:7px;box-sizing:border-box;"></div>
<div class="a" style="left:2467.0px;top:77.5px;font-size:19.9px;line-height:25px;color:#6d6d6d;">Filter</div>
<div class="a" style="left:2687.0px;top:78.5px;font-size:20px;line-height:25px;color:#1b1b1b;">Alle Ebenen</div>
<svg class="a" style="left:2803px;top:81px" width="16" height="11"><path d="M1 1H15L8 10Z" fill="#1b1b1b" stroke="#1b1b1b" stroke-linejoin="round" stroke-width="1.5"/></svg>
<svg class="a" style="left:2842px;top:80px" width="19" height="19" viewBox="0 0 19 19"><path d="M9.5 1A8.5 8.5 0 1 1 3.2 15.2L1 18L1.6 13.4A8.5 8.5 0 0 1 9.5 1Z" fill="#2b7de1"/><path d="M5.5 7.5H13.5M5.5 11H11" stroke="#fff" stroke-width="1.6"/></svg>
<div class="a" style="left:2868.0px;top:78.5px;font-size:20px;line-height:25px;color:#1b1b1b;">99+</div>
<svg class="a" style="left:2154px;top:34px" width="30" height="26" viewBox="0 0 30 26"><rect x="1" y="1" width="27" height="19" rx="3.5" fill="none" stroke="#3b3b3b" stroke-width="1.7" stroke-linecap="round" stroke-linejoin="round"/><path d="M17 13 19.5 24 22 20.5 26.5 20.5Z" fill="#efefef" stroke="#3b3b3b" stroke-width="1.6" stroke-linejoin="round"/></svg>
<svg class="a" style="left:2154px;top:77px" width="30" height="27" viewBox="0 0 30 27"><rect x="8" y="1" width="21" height="18" rx="3" fill="none" stroke="#3b3b3b" stroke-width="1.7" stroke-linecap="round" stroke-linejoin="round"/><rect x="1" y="9" width="10" height="17" rx="2.5" fill="#efefef" stroke="#3b3b3b" stroke-width="1.7"/><path d="M5 22H7M14 14H18" fill="none" stroke="#3b3b3b" stroke-width="1.7" stroke-linecap="round" stroke-linejoin="round"/></svg>
<svg class="a" style="left:2156px;top:123px" width="26" height="26" viewBox="0 0 26 26"><rect x="1" y="1" width="24" height="24" rx="4" fill="none" stroke="#3b3b3b" stroke-width="1.7" stroke-linecap="round" stroke-linejoin="round"/><path d="M1 5Q1 1 5 1H21Q25 1 25 5V7H1Z" fill="#3b3b3b"/></svg>
<div class="a" style="left:2142.8px;top:180.5px;width:52.9px;height:1.8px;background:#d0d0d0;"></div>
<svg class="a" style="left:2154px;top:214px" width="30" height="30" viewBox="0 0 30 30"><path d="M3 12.5 15 2 27 12.5V26.5Q27 28 25.5 28H19.5V19Q19.5 17.5 18 17.5H12Q10.5 17.5 10.5 19V28H4.5Q3 28 3 26.5Z" fill="none" stroke="#3b3b3b" stroke-width="1.7" stroke-linecap="round" stroke-linejoin="round"/></svg>
<svg class="a" style="left:2153px;top:268px" width="32" height="28" viewBox="0 0 32 28"><path d="M9 7 2 14 9 21M23 7 30 14 23 21M19 2 13 26" fill="none" stroke="#3b3b3b" stroke-width="1.7" stroke-linecap="round" stroke-linejoin="round"/></svg>
<div class="a" style="left:2144.7px;top:311.8px;width:49.0px;height:45.5px;background:#fbfbfb;border-radius:5px;"></div>
<div class="a" style="left:2145.3px;top:319.0px;width:3.5px;height:31.7px;background:#0f6cd6;border-radius:2px;"></div>
<svg class="a" style="left:2155px;top:321px" width="30" height="28" viewBox="0 0 30 28"><rect x="1.5" y="1.5" width="25" height="25" rx="4" fill="none" stroke="#3b3b3b" stroke-width="1.7" stroke-linecap="round" stroke-linejoin="round"/><path d="M1.5 7H26.5M6 12 10 15.5 6 19M12 21H17" fill="none" stroke="#3b3b3b" stroke-width="1.7" stroke-linecap="round" stroke-linejoin="round"/></svg>
<svg class="a" style="left:2168px;top:339px" width="17" height="17"><circle cx="8.5" cy="8.5" r="7.8" fill="#c42b1c"/><path d="M6 6 11 11M11 6 6 11" stroke="#fff" stroke-width="1.6"/></svg>
<svg class="a" style="left:2153px;top:371px" width="32" height="30" viewBox="0 0 32 30"><path d="M10.5 10Q10.5 3 16 3T21.5 10V21Q21.5 28 16 28T10.5 21Z" fill="none" stroke="#3b3b3b" stroke-width="1.7" stroke-linecap="round" stroke-linejoin="round"/><path d="M10.5 14H3M21.5 14H29M10.5 20 4 25M21.5 20 28 25M10.5 9 5 3M21.5 9 27 3M11 10H21" fill="none" stroke="#3b3b3b" stroke-width="1.7" stroke-linecap="round" stroke-linejoin="round"/></svg>
<svg class="a" style="left:2154px;top:428px" width="30" height="24" viewBox="0 0 30 24"><path d="M2 9Q15 -3 28 9M6.5 13.5Q15 5.5 23.5 13.5M11 18Q15 14.5 19 18" fill="none" stroke="#3b3b3b" stroke-width="1.7" stroke-linecap="round" stroke-linejoin="round"/><circle cx="15" cy="21" r="2" fill="#3b3b3b"/></svg>
<svg class="a" style="left:2157px;top:477px" width="26" height="32" viewBox="0 0 26 32"><path d="M7 21Q2 17 2 11.5A10 10 0 0 1 22 11.5Q22 17 17 21V26Q17 28 15 28H9Q7 28 7 26Z" fill="none" stroke="#3b3b3b" stroke-width="1.7" stroke-linecap="round" stroke-linejoin="round"/><path d="M12 13V21M9 13 12 16 15 13" fill="none" stroke="#3b3b3b" stroke-width="1.7" stroke-linecap="round" stroke-linejoin="round"/></svg>
<svg class="a" style="left:2168px;top:495px" width="17" height="17"><circle cx="8.5" cy="8.5" r="7.8" fill="#0f6cd6"/><path d="M8.5 7.5V12.5" stroke="#fff" stroke-width="1.8"/><circle cx="8.5" cy="4.8" r="1.1" fill="#fff"/></svg>
<svg class="a" style="left:2152px;top:531px" width="34" height="24" viewBox="0 0 34 24"><path d="M2 12Q2 2 17 2T32 12M6 6 8 8.5M17 2V5M28 6 26 8.5M22 5 15 22Q14 23 13 22Q12 21 13 20Z" fill="none" stroke="#3b3b3b" stroke-width="1.7" stroke-linecap="round" stroke-linejoin="round"/></svg>
<svg class="a" style="left:2154px;top:580px" width="30" height="32" viewBox="0 0 30 32"><rect x="5" y="6" width="20" height="20" rx="3.5" fill="none" stroke="#3b3b3b" stroke-width="1.7" stroke-linecap="round" stroke-linejoin="round"/><circle cx="15" cy="16" r="4.5" fill="none" stroke="#3b3b3b" stroke-width="1.7" stroke-linecap="round" stroke-linejoin="round"/><path d="M10 1.5V6M15 1.5V6M20 1.5V6M10 26V30.5M15 26V30.5M20 26V30.5M1 11H5M1 16H5M1 21H5M25 11H29M25 16H29M25 21H29" fill="none" stroke="#3b3b3b" stroke-width="1.7" stroke-linecap="round" stroke-linejoin="round"/></svg>
<svg class="a" style="left:2156px;top:636px" width="26" height="26" viewBox="0 0 26 26"><rect x="1" y="1" width="24" height="24" rx="4.5" fill="none" stroke="#3b3b3b" stroke-width="1.7" stroke-linecap="round" stroke-linejoin="round"/><path d="M1 7H25" fill="none" stroke="#3b3b3b" stroke-width="1.7" stroke-linecap="round" stroke-linejoin="round"/></svg>
<svg class="a" style="left:2150px;top:684px" width="38" height="35" viewBox="0 0 38 35"><path d="M0 0H8L19 19 30 0H38L19 34Z" fill="#41b883"/><path d="M8 0H14.5L19 8 23.5 0H30L19 19Z" fill="#35495e"/></svg>
<svg class="a" style="left:2157px;top:744px" width="26" height="26" viewBox="0 0 26 26"><path d="M13 1V25M1 13H25" fill="none" stroke="#3b3b3b" stroke-width="1.7" stroke-linecap="round" stroke-linejoin="round"/></svg>
<div class="a" style="left:2200px;top:116px;width:1391px;height:45px;overflow:hidden">
</div>
<div class="a" style="left:0;top:116px;width:3600px;height:45px;overflow:hidden">
<div class="a" style="left:2280.0px;top:-11.5px;font-family:'Liberation Mono', monospace;font-size:19.2px;line-height:28px;color:#1f1f1f;-webkit-text-stroke:.35px currentColor"><span style="color:#6e6e6e;font-style:italic;">Proxy(Array) </span><span style="color:#6e6e6e;font-style:italic;">{</span><span style="color:#6c1a74;font-style:italic;">0</span><span style="color:#6e6e6e;font-style:italic;">: </span><span style="color:#6e6e6e;font-style:italic;">{…}</span><span style="color:#6e6e6e;font-style:italic;">, </span><span style="color:#6c1a74;font-style:italic;">1</span><span style="color:#6e6e6e;font-style:italic;">: </span><span style="color:#6e6e6e;font-style:italic;">{…}</span><span style="color:#6e6e6e;font-style:italic;">, </span><span style="color:#6c1a74;font-style:italic;">2</span><span style="color:#6e6e6e;font-style:italic;">: </span><span style="color:#6e6e6e;font-style:italic;">{…}</span><span style="color:#6e6e6e;font-style:italic;">, </span><span style="color:#6c1a74;font-style:italic;">3</span><span style="color:#6e6e6e;font-style:italic;">: </span><span style="color:#6e6e6e;font-style:italic;">{…}</span><span style="color:#6e6e6e;font-style:italic;">, </span><span style="color:#6c1a74;font-style:italic;">4</span><span style="color:#6e6e6e;font-style:italic;">: </span><span style="color:#6e6e6e;font-style:italic;">{…}</span><span style="color:#6e6e6e;font-style:italic;">, </span><span style="color:#6c1a74;font-style:italic;">5</span><span style="color:#6e6e6e;font-style:italic;">: </span><span style="color:#6e6e6e;font-style:italic;">{…}</span><span style="color:#6e6e6e;font-style:italic;">, </span><span style="color:#6c1a74;font-style:italic;">6</span><span style="color:#6e6e6e;font-style:italic;">: </span><span style="color:#6e6e6e;font-style:italic;">{…}</span><span style="color:#6e6e6e;font-style:italic;">, </span><span style="color:#6c1a74;font-style:italic;">7</span><span style="color:#6e6e6e;font-style:italic;">: </span><span style="color:#6e6e6e;font-style:italic;">{…}</span><span style="color:#6e6e6e;font-style:italic;">, </span><span style="color:#6c1a74;font-style:italic;">8</span><span style="color:#6e6e6e;font-style:italic;">: </span><span style="color:#6e6e6e;font-style:italic;">{…}</span><span style="color:#6e6e6e;font-style:italic;">, </span><span style="color:#6c1a74;font-style:italic;">9</span><span style="color:#6e6e6e;font-style:italic;">: </span><span style="color:#6e6e6e;font-style:italic;">{…}</span><span style="color:#6e6e6e;font-style:italic;">, </span><span style="color:#6c1a74;font-style:italic;">10</span><span style="color:#6e6e6e;font-style:italic;">: </span><span style="color:#6e6e6e;font-style:italic;">{…}</span><span style="color:#6e6e6e;font-style:italic;">, </span><span style="color:#6c1a74;font-style:italic;">11</span><span style="color:#6e6e6e;font-style:italic;">: </span><span style="color:#6e6e6e;font-style:italic;">{…}</span><span style="color:#6e6e6e;font-style:italic;">, </span><span style="color:#6c1a74;font-style:italic;">1</span></div>
<div class="a" style="left:2280.0px;top:13.0px;font-family:'Liberation Mono', monospace;font-size:19.2px;line-height:28px;color:#1f1f1f;-webkit-text-stroke:.35px currentColor"><span style="color:#6c1a74;font-style:italic;">2</span><span style="color:#6e6e6e;font-style:italic;">: </span><span style="color:#6e6e6e;font-style:italic;">{…}</span><span style="color:#6e6e6e;font-style:italic;">}</span></div>
<svg class="a" style="left:2260.3px;top:7.0px" width="11" height="13" viewBox="0 0 10 12"><path d="M1.2 1Q0 0 0 1.6V10.4Q0 12 1.2 11L8.8 6.8Q10 6 8.8 5.2Z" fill="#474747"/></svg>
</div>
<div class="a" style="left:2250.0px;top:161.0px;width:1330.0px;height:1.3px;background:#dbe4f3;"></div>
<div class="a" style="left:2250.3px;top:170.4px;font-family:'Liberation Mono', monospace;font-size:19.2px;line-height:28px;color:#1f1f1f;-webkit-text-stroke:.35px currentColor">saving data: openWB/set/log/mqttjs_50ad822d/data <span style="color:#7a7a7a;">undefined</span></div>
<div class="a" style="left:3355.0px;top:170.4px;font-family:'Liberation Mono', monospace;font-size:19.2px;line-height:28px;color:#1f1f1f;-webkit-text-stroke:.35px currentColor"><span style="color:#1a468a;text-decoration:underline;text-underline-offset:3px">index-27fa029b.js:1</span></div>
<div class="a" style="left:2250.0px;top:200.0px;width:1330.0px;height:1.3px;background:#dbe4f3;"></div>
<div class="a" style="left:2250.3px;top:208.3px;font-family:'Liberation Mono', monospace;font-size:19.2px;line-height:28px;color:#1f1f1f;-webkit-text-stroke:.35px currentColor">saving data: openWB/set/vehicle/template/ev_template/0</div>
<div class="a" style="left:3355.0px;top:208.3px;font-family:'Liberation Mono', monospace;font-size:19.2px;line-height:28px;color:#1f1f1f;-webkit-text-stroke:.35px currentColor"><span style="color:#1a468a;text-decoration:underline;text-underline-offset:3px">index-27fa029b.js:1</span></div>
<svg class="a" style="left:2260.3px;top:252.2px" width="11" height="13" viewBox="0 0 10 12"><path d="M1.2 1Q0 0 0 1.6V10.4Q0 12 1.2 11L8.8 6.8Q10 6 8.8 5.2Z" fill="#474747"/></svg>
<div class="a" style="left:2276.0px;top:233.6px;font-family:'Liberation Mono', monospace;font-size:19.2px;line-height:28px;color:#1f1f1f;-webkit-text-stroke:.35px currentColor"><span style="color:#6e6e6e;font-style:italic;">Proxy(Object) </span><span style="color:#6e6e6e;font-style:italic;">{</span><span style="color:#6c1a74;font-style:italic;">name</span><span style="color:#6e6e6e;font-style:italic;">: </span><span style="color:#9c2777;font-style:italic;">'Standard-Fahrzeug-Vorlage'</span><span style="color:#6e6e6e;font-style:italic;">, </span><span style="color:#6c1a74;font-style:italic;">max_current_multi_phases</span><span style="color:#6e6e6e;font-style:italic;">: </span><span style="color:#1a1aa6;font-style:italic;">16</span><span style="color:#6e6e6e;font-style:italic;">, </span><span style="color:#6c1a74;font-style:italic;">max_phases</span><span style="color:#6e6e6e;font-style:italic;">: </span><span style="color:#1a1aa6;font-style:italic;">3</span><span style="color:#6e6e6e;font-style:italic;">, </span><span style="color:#6c1a74;font-style:italic;">phase_switch_paus</span></div>
<div class="a" style="left:2276.0px;top:258.5px;font-family:'Liberation Mono', monospace;font-size:19.2px;line-height:28px;color:#1f1f1f;-webkit-text-stroke:.35px currentColor"><span style="color:#6c1a74;font-style:italic;">e</span><span style="color:#6e6e6e;font-style:italic;">: </span><span style="color:#1a1aa6;font-style:italic;">2</span><span style="color:#6e6e6e;font-style:italic;">, </span><span style="color:#6c1a74;font-style:italic;">prevent_phase_switch</span><span style="color:#6e6e6e;font-style:italic;">: </span><span style="color:#1a1aa6;font-style:italic;">false</span><span style="color:#6e6e6e;font-style:italic;">, </span><span style="color:#6e6e6e;font-style:italic;">…}</span></div>
<div class="a" style="left:2250.0px;top:290.0px;width:1330.0px;height:1.3px;background:#dbe4f3;"></div>
<div class="a" style="left:2250.3px;top:298.3px;font-family:'Liberation Mono', monospace;font-size:19.2px;line-height:28px;color:#1f1f1f;-webkit-text-stroke:.35px currentColor">saving data: openWB/set/vehicle/template/charge_template/0</div>
<div class="a" style="left:3355.0px;top:298.3px;font-family:'Liberation Mono', monospace;font-size:19.2px;line-height:28px;color:#1f1f1f;-webkit-text-stroke:.35px currentColor"><span style="color:#1a468a;text-decoration:underline;text-underline-offset:3px">index-27fa029b.js:1</span></div>
<svg class="a" style="left:2260.3px;top:342.2px" width="11" height="13" viewBox="0 0 10 12"><path d="M1.2 1Q0 0 0 1.6V10.4Q0 12 1.2 11L8.8 6.8Q10 6 8.8 5.2Z" fill="#474747"/></svg>
<div class="a" style="left:2276.0px;top:323.6px;font-family:'Liberation Mono', monospace;font-size:19.2px;line-height:28px;color:#1f1f1f;-webkit-text-stroke:.35px currentColor"><span style="color:#6e6e6e;font-style:italic;">Proxy(Object) </span><span style="color:#6e6e6e;font-style:italic;">{</span><span style="color:#6c1a74;font-style:italic;">name</span><span style="color:#6e6e6e;font-style:italic;">: </span><span style="color:#9c2777;font-style:italic;">'Standard-Ladeprofil-Vorlage'</span><span style="color:#6e6e6e;font-style:italic;">, </span><span style="color:#6c1a74;font-style:italic;">disable_after_unplug</span><span style="color:#6e6e6e;font-style:italic;">: </span><span style="color:#1a1aa6;font-style:italic;">false</span><span style="color:#6e6e6e;font-style:italic;">, </span><span style="color:#6c1a74;font-style:italic;">prio</span><span style="color:#6e6e6e;font-style:italic;">: </span><span style="color:#1a1aa6;font-style:italic;">false</span><span style="color:#6e6e6e;font-style:italic;">, </span><span style="color:#6c1a74;font-style:italic;">load_default</span><span style="color:#6e6e6e;font-style:italic;">: </span><span style="color:#1a1aa6;font-style:italic;">fals</span></div>
<div class="a" style="left:2276.0px;top:348.5px;font-family:'Liberation Mono', monospace;font-size:19.2px;line-height:28px;color:#1f1f1f;-webkit-text-stroke:.35px currentColor"><span style="color:#1a1aa6;font-style:italic;">e</span><span style="color:#6e6e6e;font-style:italic;">, </span><span style="color:#6c1a74;font-style:italic;">time_charging</span><span style="color:#6e6e6e;font-style:italic;">: </span><span style="color:#6e6e6e;font-style:italic;">{…}</span><span style="color:#6e6e6e;font-style:italic;">, </span><span style="color:#6e6e6e;font-style:italic;">…}</span></div>
<div class="a" style="left:2250.0px;top:379.6px;width:1330.0px;height:1.3px;background:#dbe4f3;"></div>
<div class="a" style="left:2250.3px;top:387.6px;font-family:'Liberation Mono', monospace;font-size:19.2px;line-height:28px;color:#1f1f1f;-webkit-text-stroke:.35px currentColor">saving data: openWB/set/vehicle/template/charge_template/0/time_charging/plans/0</div>
<div class="a" style="left:3355.0px;top:387.6px;font-family:'Liberation Mono', monospace;font-size:19.2px;line-height:28px;color:#1f1f1f;-webkit-text-stroke:.35px currentColor"><span style="color:#1a468a;text-decoration:underline;text-underline-offset:3px">index-27fa029b.js:1</span></div>
<svg class="a" style="left:2260.3px;top:420.6px" width="11" height="13" viewBox="0 0 10 12"><path d="M1.2 1Q0 0 0 1.6V10.4Q0 12 1.2 11L8.8 6.8Q10 6 8.8 5.2Z" fill="#474747"/></svg>
<div class="a" style="left:2281.0px;top:413.6px;font-family:'Liberation Mono', monospace;font-size:19.2px;line-height:28px;color:#1f1f1f;-webkit-text-stroke:.35px currentColor"><span style="color:#6e6e6e;font-style:italic;">Proxy(Object) </span><span style="color:#6e6e6e;font-style:italic;">{</span><span style="color:#6c1a74;font-style:italic;">active</span><span style="color:#6e6e6e;font-style:italic;">: </span><span style="color:#1a1aa6;font-style:italic;">false</span><span style="color:#6e6e6e;font-style:italic;">, </span><span style="color:#6c1a74;font-style:italic;">frequency</span><span style="color:#6e6e6e;font-style:italic;">: </span><span style="color:#6e6e6e;font-style:italic;">{…}</span><span style="color:#6e6e6e;font-style:italic;">, </span><span style="color:#6c1a74;font-style:italic;">time</span><span style="color:#6e6e6e;font-style:italic;">: </span><span style="color:#6e6e6e;font-style:italic;">Array(2)</span><span style="color:#6e6e6e;font-style:italic;">, </span><span style="color:#6c1a74;font-style:italic;">name</span><span style="color:#6e6e6e;font-style:italic;">: </span><span style="color:#9c2777;font-style:italic;">'Debug'</span><span style="color:#6e6e6e;font-style:italic;">, </span><span style="color:#6c1a74;font-style:italic;">current</span><span style="color:#6e6e6e;font-style:italic;">: </span><span style="color:#1a1aa6;font-style:italic;">16</span><span style="color:#6e6e6e;font-style:italic;">, </span><span style="color:#6e6e6e;font-style:italic;">…}</span></div>
<div class="a" style="left:2250.0px;top:446.2px;width:1330.0px;height:1.3px;background:#dbe4f3;"></div>
<div class="a" style="left:2250.3px;top:454.5px;font-family:'Liberation Mono', monospace;font-size:19.2px;line-height:28px;color:#1f1f1f;-webkit-text-stroke:.35px currentColor">saving data: openWB/set/vehicle/0/name Standard-Fahrzeug</div>
<div class="a" style="left:3355.0px;top:454.5px;font-family:'Liberation Mono', monospace;font-size:19.2px;line-height:28px;color:#1f1f1f;-webkit-text-stroke:.35px currentColor"><span style="color:#1a468a;text-decoration:underline;text-underline-offset:3px">index-27fa029b.js:1</span></div>
<div class="a" style="left:2250.0px;top:486.0px;width:1330.0px;height:1.3px;background:#dbe4f3;"></div>
<div class="a" style="left:2250.3px;top:494.3px;font-family:'Liberation Mono', monospace;font-size:19.2px;line-height:28px;color:#1f1f1f;-webkit-text-stroke:.35px currentColor">saving data: openWB/set/vehicle/1/name Fahrzeug2</div>
<div class="a" style="left:3355.0px;top:494.3px;font-family:'Liberation Mono', monospace;font-size:19.2px;line-height:28px;color:#1f1f1f;-webkit-text-stroke:.35px currentColor"><span style="color:#1a468a;text-decoration:underline;text-underline-offset:3px">index-27fa029b.js:1</span></div>
<div class="a" style="left:2250.0px;top:525.4px;width:1330.0px;height:1.3px;background:#dbe4f3;"></div>
<div class="a" style="left:2250.3px;top:533.7px;font-family:'Liberation Mono', monospace;font-size:19.2px;line-height:28px;color:#1f1f1f;-webkit-text-stroke:.35px currentColor">saving data: openWB/set/vehicle/5/name Standard-Fahrzeug</div>
<div class="a" style="left:3355.0px;top:533.7px;font-family:'Liberation Mono', monospace;font-size:19.2px;line-height:28px;color:#1f1f1f;-webkit-text-stroke:.35px currentColor"><span style="color:#1a468a;text-decoration:underline;text-underline-offset:3px">index-27fa029b.js:1</span></div>
<div class="a" style="left:2250.0px;top:564.2px;width:1330.0px;height:1.3px;background:#dbe4f3;"></div>
<div class="a" style="left:2250.3px;top:572.5px;font-family:'Liberation Mono', monospace;font-size:19.2px;line-height:28px;color:#1f1f1f;-webkit-text-stroke:.35px currentColor">saving data: openWB/set/vehicle/6/name Tronity Test</div>
<div class="a" style="left:3355.0px;top:572.5px;font-family:'Liberation Mono', monospace;font-size:19.2px;line-height:28px;color:#1f1f1f;-webkit-text-stroke:.35px currentColor"><span style="color:#1a468a;text-decoration:underline;text-underline-offset:3px">index-27fa029b.js:1</span></div>
<div class="a" style="left:2250.0px;top:603.4px;width:1330.0px;height:1.3px;background:#dbe4f3;"></div>
<div class="a" style="left:2250.3px;top:611.7px;font-family:'Liberation Mono', monospace;font-size:19.2px;line-height:28px;color:#1f1f1f;-webkit-text-stroke:.35px currentColor">saving data: openWB/set/vehicle/0/charge_template <span style="color:#1a1aa6;">0</span></div>
<div class="a" style="left:3355.0px;top:611.7px;font-family:'Liberation Mono', monospace;font-size:19.2px;line-height:28px;color:#1f1f1f;-webkit-text-stroke:.35px currentColor"><span style="color:#1a468a;text-decoration:underline;text-underline-offset:3px">index-27fa029b.js:1</span></div>
<div class="a" style="left:2250.0px;top:642.5px;width:1330.0px;height:1.3px;background:#dbe4f3;"></div>
<div class="a" style="left:2250.3px;top:650.8px;font-family:'Liberation Mono', monospace;font-size:19.2px;line-height:28px;color:#1f1f1f;-webkit-text-stroke:.35px currentColor">saving data: openWB/set/vehicle/1/charge_template <span style="color:#1a1aa6;">0</span></div>
<div class="a" style="left:3355.0px;top:650.8px;font-family:'Liberation Mono', monospace;font-size:19.2px;line-height:28px;color:#1f1f1f;-webkit-text-stroke:.35px currentColor"><span style="color:#1a468a;text-decoration:underline;text-underline-offset:3px">index-27fa029b.js:1</span></div>
<div class="a" style="left:2250.0px;top:681.3px;width:1330.0px;height:1.3px;background:#dbe4f3;"></div>
<div class="a" style="left:2250.3px;top:689.6px;font-family:'Liberation Mono', monospace;font-size:19.2px;line-height:28px;color:#1f1f1f;-webkit-text-stroke:.35px currentColor">saving data: openWB/set/vehicle/5/charge_template <span style="color:#1a1aa6;">0</span></div>
<div class="a" style="left:3355.0px;top:689.6px;font-family:'Liberation Mono', monospace;font-size:19.2px;line-height:28px;color:#1f1f1f;-webkit-text-stroke:.35px currentColor"><span style="color:#1a468a;text-decoration:underline;text-underline-offset:3px">index-27fa029b.js:1</span></div>
<div class="a" style="left:2250.0px;top:721.0px;width:1330.0px;height:1.3px;background:#dbe4f3;"></div>
<div class="a" style="left:2250.3px;top:729.3px;font-family:'Liberation Mono', monospace;font-size:19.2px;line-height:28px;color:#1f1f1f;-webkit-text-stroke:.35px currentColor">saving data: openWB/set/vehicle/6/charge_template <span style="color:#1a1aa6;">0</span></div>
<div class="a" style="left:3355.0px;top:729.3px;font-family:'Liberation Mono', monospace;font-size:19.2px;line-height:28px;color:#1f1f1f;-webkit-text-stroke:.35px currentColor"><span style="color:#1a468a;text-decoration:underline;text-underline-offset:3px">index-27fa029b.js:1</span></div>
<div class="a" style="left:2250.0px;top:760.4px;width:1330.0px;height:1.3px;background:#dbe4f3;"></div>
<div class="a" style="left:2250.3px;top:768.7px;font-family:'Liberation Mono', monospace;font-size:19.2px;line-height:28px;color:#1f1f1f;-webkit-text-stroke:.35px currentColor">saving data: openWB/set/vehicle/0/ev_template <span style="color:#1a1aa6;">0</span></div>
<div class="a" style="left:3355.0px;top:768.7px;font-family:'Liberation Mono', monospace;font-size:19.2px;line-height:28px;color:#1f1f1f;-webkit-text-stroke:.35px currentColor"><span style="color:#1a468a;text-decoration:underline;text-underline-offset:3px">index-27fa029b.js:1</span></div>
<div class="a" style="left:2250.0px;top:799.0px;width:1330.0px;height:1.3px;background:#dbe4f3;"></div>
<div class="a" style="left:2250.3px;top:807.3px;font-family:'Liberation Mono', monospace;font-size:19.2px;line-height:28px;color:#1f1f1f;-webkit-text-stroke:.35px currentColor">saving data: openWB/set/vehicle/1/ev_template <span style="color:#1a1aa6;">0</span></div>
<div class="a" style="left:3355.0px;top:807.3px;font-family:'Liberation Mono', monospace;font-size:19.2px;line-height:28px;color:#1f1f1f;-webkit-text-stroke:.35px currentColor"><span style="color:#1a468a;text-decoration:underline;text-underline-offset:3px">index-27fa029b.js:1</span></div>
<div class="a" style="left:2250.0px;top:838.0px;width:1330.0px;height:1.3px;background:#dbe4f3;"></div>
<div class="a" style="left:2250.3px;top:846.3px;font-family:'Liberation Mono', monospace;font-size:19.2px;line-height:28px;color:#1f1f1f;-webkit-text-stroke:.35px currentColor">saving data: openWB/set/vehicle/5/ev_template <span style="color:#1a1aa6;">0</span></div>
<div class="a" style="left:3355.0px;top:846.3px;font-family:'Liberation Mono', monospace;font-size:19.2px;line-height:28px;color:#1f1f1f;-webkit-text-stroke:.35px currentColor"><span style="color:#1a468a;text-decoration:underline;text-underline-offset:3px">index-27fa029b.js:1</span></div>
<div class="a" style="left:2250.0px;top:877.5px;width:1330.0px;height:1.3px;background:#dbe4f3;"></div>
<div class="a" style="left:2250.3px;top:885.8px;font-family:'Liberation Mono', monospace;font-size:19.2px;line-height:28px;color:#1f1f1f;-webkit-text-stroke:.35px currentColor">saving data: openWB/set/vehicle/6/ev_template <span style="color:#1a1aa6;">0</span></div>
<div class="a" style="left:3355.0px;top:885.8px;font-family:'Liberation Mono', monospace;font-size:19.2px;line-height:28px;color:#1f1f1f;-webkit-text-stroke:.35px currentColor"><span style="color:#1a468a;text-decoration:underline;text-underline-offset:3px">index-27fa029b.js:1</span></div>
<div class="a" style="left:2250.0px;top:917.2px;width:1330.0px;height:1.3px;background:#dbe4f3;"></div>
<div class="a" style="left:2250.3px;top:925.5px;font-family:'Liberation Mono', monospace;font-size:19.2px;line-height:28px;color:#1f1f1f;-webkit-text-stroke:.35px currentColor">saving data: openWB/set/vehicle/0/tag_id</div>
<div class="a" style="left:3355.0px;top:925.5px;font-family:'Liberation Mono', monospace;font-size:19.2px;line-height:28px;color:#1f1f1f;-webkit-text-stroke:.35px currentColor"><span style="color:#1a468a;text-decoration:underline;text-underline-offset:3px">index-27fa029b.js:1</span></div>
<svg class="a" style="left:2734.0px;top:931.7px" width="11" height="13" viewBox="0 0 10 12"><path d="M1.2 1Q0 0 0 1.6V10.4Q0 12 1.2 11L8.8 6.8Q10 6 8.8 5.2Z" fill="#474747"/></svg>
<div class="a" style="left:2756.0px;top:926.2px;font-family:'Liberation Mono', monospace;font-size:19.2px;line-height:28px;color:#1f1f1f;-webkit-text-stroke:.35px currentColor"><span style="color:#6e6e6e;font-style:italic;">Proxy(Array) </span><span style="color:#6e6e6e;font-style:italic;">{}</span></div>
<div class="a" style="left:2250.0px;top:959.0px;width:1330.0px;height:1.3px;background:#dbe4f3;"></div>
<div class="a" style="left:2250.3px;top:967.3px;font-family:'Liberation Mono', monospace;font-size:19.2px;line-height:28px;color:#1f1f1f;-webkit-text-stroke:.35px currentColor">saving data: openWB/set/vehicle/1/tag_id</div>
<div class="a" style="left:3355.0px;top:967.3px;font-family:'Liberation Mono', monospace;font-size:19.2px;line-height:28px;color:#1f1f1f;-webkit-text-stroke:.35px currentColor"><span style="color:#1a468a;text-decoration:underline;text-underline-offset:3px">index-27fa029b.js:1</span></div>
<svg class="a" style="left:2734.0px;top:973.5px" width="11" height="13" viewBox="0 0 10 12"><path d="M1.2 1Q0 0 0 1.6V10.4Q0 12 1.2 11L8.8 6.8Q10 6 8.8 5.2Z" fill="#474747"/></svg>
<div class="a" style="left:2756.0px;top:968.0px;font-family:'Liberation Mono', monospace;font-size:19.2px;line-height:28px;color:#1f1f1f;-webkit-text-stroke:.35px currentColor"><span style="color:#6e6e6e;font-style:italic;">Proxy(Array) </span><span style="color:#6e6e6e;font-style:italic;">{}</span></div>
<div class="a" style="left:2250.0px;top:1001.0px;width:1330.0px;height:1.3px;background:#dbe4f3;"></div>
<div class="a" style="left:2250.3px;top:1009.3px;font-family:'Liberation Mono', monospace;font-size:19.2px;line-height:28px;color:#1f1f1f;-webkit-text-stroke:.35px currentColor">saving data: openWB/set/vehicle/5/tag_id</div>
<div class="a" style="left:3355.0px;top:1009.3px;font-family:'Liberation Mono', monospace;font-size:19.2px;line-height:28px;color:#1f1f1f;-webkit-text-stroke:.35px currentColor"><span style="color:#1a468a;text-decoration:underline;text-underline-offset:3px">index-27fa029b.js:1</span></div>
<svg class="a" style="left:2734.0px;top:1015.5px" width="11" height="13" viewBox="0 0 10 12"><path d="M1.2 1Q0 0 0 1.6V10.4Q0 12 1.2 11L8.8 6.8Q10 6 8.8 5.2Z" fill="#474747"/></svg>
<div class="a" style="left:2756.0px;top:1010.0px;font-family:'Liberation Mono', monospace;font-size:19.2px;line-height:28px;color:#1f1f1f;-webkit-text-stroke:.35px currentColor"><span style="color:#6e6e6e;font-style:italic;">Proxy(Array) </span><span style="color:#6e6e6e;font-style:italic;">{}</span></div>
<div class="a" style="left:2250.0px;top:1043.0px;width:1330.0px;height:1.3px;background:#dbe4f3;"></div>
<div class="a" style="left:2250.3px;top:1051.3px;font-family:'Liberation Mono', monospace;font-size:19.2px;line-height:28px;color:#1f1f1f;-webkit-text-stroke:.35px currentColor">saving data: openWB/set/vehicle/6/tag_id</div>
<div class="a" style="left:3355.0px;top:1051.3px;font-family:'Liberation Mono', monospace;font-size:19.2px;line-height:28px;color:#1f1f1f;-webkit-text-stroke:.35px currentColor"><span style="color:#1a468a;text-decoration:underline;text-underline-offset:3px">index-27fa029b.js:1</span></div>
<svg class="a" style="left:2734.0px;top:1057.5px" width="11" height="13" viewBox="0 0 10 12"><path d="M1.2 1Q0 0 0 1.6V10.4Q0 12 1.2 11L8.8 6.8Q10 6 8.8 5.2Z" fill="#474747"/></svg>
<div class="a" style="left:2756.0px;top:1052.0px;font-family:'Liberation Mono', monospace;font-size:19.2px;line-height:28px;color:#1f1f1f;-webkit-text-stroke:.35px currentColor"><span style="color:#6e6e6e;font-style:italic;">Proxy(Array) </span><span style="color:#6e6e6e;font-style:italic;">{}</span></div>
<div class="a" style="left:2250.0px;top:1085.3px;width:1330.0px;height:1.3px;background:#dbe4f3;"></div>
<div class="a" style="left:2250.3px;top:1092.9px;font-family:'Liberation Mono', monospace;font-size:19.2px;line-height:28px;color:#1f1f1f;-webkit-text-stroke:.35px currentColor">saving data: openWB/set/vehicle/0/soc_module/config</div>
<div class="a" style="left:3355.0px;top:1092.9px;font-family:'Liberation Mono', monospace;font-size:19.2px;line-height:28px;color:#1f1f1f;-webkit-text-stroke:.35px currentColor"><span style="color:#1a468a;text-decoration:underline;text-underline-offset:3px">index-27fa029b.js:1</span></div>
<svg class="a" style="left:2260.3px;top:1126.3px" width="11" height="13" viewBox="0 0 10 12"><path d="M1.2 1Q0 0 0 1.6V10.4Q0 12 1.2 11L8.8 6.8Q10 6 8.8 5.2Z" fill="#474747"/></svg>
<div class="a" style="left:2281.0px;top:1120.0px;font-family:'Liberation Mono', monospace;font-size:19.2px;line-height:28px;color:#1f1f1f;-webkit-text-stroke:.35px currentColor"><span style="color:#6e6e6e;font-style:italic;">Proxy(Object) </span><span style="color:#6e6e6e;font-style:italic;">{</span><span style="color:#6c1a74;font-style:italic;">type</span><span style="color:#6e6e6e;font-style:italic;">: </span><span style="color:#6e6e6e;font-style:italic;">null</span><span style="color:#6e6e6e;font-style:italic;">, </span><span style="color:#6c1a74;font-style:italic;">configuration</span><span style="color:#6e6e6e;font-style:italic;">: </span><span style="color:#6e6e6e;font-style:italic;">{…}</span><span style="color:#6e6e6e;font-style:italic;">}</span></div>
<div class="a" style="left:2250.0px;top:1152.2px;width:1330.0px;height:1.3px;background:#dbe4f3;"></div>
<div class="a" style="left:2250.3px;top:1159.8px;font-family:'Liberation Mono', monospace;font-size:19.2px;line-height:28px;color:#1f1f1f;-webkit-text-stroke:.35px currentColor">saving data: openWB/set/vehicle/1/soc_module/config</div>
<div class="a" style="left:3355.0px;top:1159.8px;font-family:'Liberation Mono', monospace;font-size:19.2px;line-height:28px;color:#1f1f1f;-webkit-text-stroke:.35px currentColor"><span style="color:#1a468a;text-decoration:underline;text-underline-offset:3px">index-27fa029b.js:1</span></div>
<svg class="a" style="left:2260.3px;top:1193.2px" width="11" height="13" viewBox="0 0 10 12"><path d="M1.2 1Q0 0 0 1.6V10.4Q0 12 1.2 11L8.8 6.8Q10 6 8.8 5.2Z" fill="#474747"/></svg>
<div class="a" style="left:2281.0px;top:1186.9px;font-family:'Liberation Mono', monospace;font-size:19.2px;line-height:28px;color:#1f1f1f;-webkit-text-stroke:.35px currentColor"><span style="color:#6e6e6e;font-style:italic;">Proxy(Object) </span><span style="color:#6e6e6e;font-style:italic;">{</span><span style="color:#6c1a74;font-style:italic;">type</span><span style="color:#6e6e6e;font-style:italic;">: </span><span style="color:#6e6e6e;font-style:italic;">null</span><span style="color:#6e6e6e;font-style:italic;">, </span><span style="color:#6c1a74;font-style:italic;">configuration</span><span style="color:#6e6e6e;font-style:italic;">: </span><span style="color:#6e6e6e;font-style:italic;">{…}</span><span style="color:#6e6e6e;font-style:italic;">}</span></div>
<div class="a" style="left:2250.0px;top:1219.0px;width:1330.0px;height:1.3px;background:#dbe4f3;"></div>
<div class="a" style="left:2250.3px;top:1226.6px;font-family:'Liberation Mono', monospace;font-size:19.2px;line-height:28px;color:#1f1f1f;-webkit-text-stroke:.35px currentColor">saving data: openWB/set/vehicle/5/soc_module/config</div>
<div class="a" style="left:3355.0px;top:1226.6px;font-family:'Liberation Mono', monospace;font-size:19.2px;line-height:28px;color:#1f1f1f;-webkit-text-stroke:.35px currentColor"><span style="color:#1a468a;text-decoration:underline;text-underline-offset:3px">index-27fa029b.js:1</span></div>
<svg class="a" style="left:2260.3px;top:1260.0px" width="11" height="13" viewBox="0 0 10 12"><path d="M1.2 1Q0 0 0 1.6V10.4Q0 12 1.2 11L8.8 6.8Q10 6 8.8 5.2Z" fill="#474747"/></svg>
<div class="a" style="left:2281.0px;top:1253.7px;font-family:'Liberation Mono', monospace;font-size:19.2px;line-height:28px;color:#1f1f1f;-webkit-text-stroke:.35px currentColor"><span style="color:#6e6e6e;font-style:italic;">Proxy(Object) </span><span style="color:#6e6e6e;font-style:italic;">{</span><span style="color:#6c1a74;font-style:italic;">type</span><span style="color:#6e6e6e;font-style:italic;">: </span><span style="color:#6e6e6e;font-style:italic;">null</span><span style="color:#6e6e6e;font-style:italic;">, </span><span style="color:#6c1a74;font-style:italic;">configuration</span><span style="color:#6e6e6e;font-style:italic;">: </span><span style="color:#6e6e6e;font-style:italic;">{…}</span><span style="color:#6e6e6e;font-style:italic;">}</span></div>
<div class="a" style="left:2250.0px;top:1286.0px;width:1330.0px;height:1.3px;background:#dbe4f3;"></div>
<div class="a" style="left:2250.3px;top:1294.5px;font-family:'Liberation Mono', monospace;font-size:19.2px;line-height:28px;color:#1f1f1f;-webkit-text-stroke:.35px currentColor">saving data: openWB/set/vehicle/6/soc_module/config</div>
<div class="a" style="left:3355.0px;top:1294.5px;font-family:'Liberation Mono', monospace;font-size:19.2px;line-height:28px;color:#1f1f1f;-webkit-text-stroke:.35px currentColor"><span style="color:#1a468a;text-decoration:underline;text-underline-offset:3px">index-27fa029b.js:1</span></div>
<svg class="a" style="left:2256.5px;top:1329.5px" width="14" height="12" viewBox="0 0 12 10"><path d="M1 1.2Q0 0 1.6 0H10.4Q12 0 11 1.2L6.8 8.8Q6 10 5.2 8.8Z" fill="#474747"/></svg>
<div class="a" style="left:2281.0px;top:1321.6px;font-family:'Liberation Mono', monospace;font-size:19.2px;line-height:28px;color:#1f1f1f;-webkit-text-stroke:.35px currentColor"><span style="color:#6e6e6e;font-style:italic;">Proxy(Object) </span><span style="color:#6e6e6e;font-style:italic;">{</span><span style="color:#6c1a74;font-style:italic;">name</span><span style="color:#6e6e6e;font-style:italic;">: </span><span style="color:#9c2777;font-style:italic;">'Tronity'</span><span style="color:#6e6e6e;font-style:italic;">, </span><span style="color:#6c1a74;font-style:italic;">type</span><span style="color:#6e6e6e;font-style:italic;">: </span><span style="color:#9c2777;font-style:italic;">'tronity'</span><span style="color:#6e6e6e;font-style:italic;">, </span><span style="color:#6c1a74;font-style:italic;">configuration</span><span style="color:#6e6e6e;font-style:italic;">: </span><span style="color:#6e6e6e;font-style:italic;">{…}</span><span style="color:#6e6e6e;font-style:italic;">}</span></div>
<div class="a" style="left:3077px;top:1325px;width:19.5px;height:18.6px;background:#3e7b1e;border-radius:4px"></div>
<div class="a" style="left:3082px;top:1326px;font-family:'Liberation Serif',serif;font-style:italic;font-size:15px;line-height:16px;color:#fff">i</div>
<svg class="a" style="left:2281.0px;top:1356.5px" width="12" height="14" viewBox="0 0 10 12"><path d="M1.2 1Q0 0 0 1.6V10.4Q0 12 1.2 11L8.8 6.8Q10 6 8.8 5.2Z" fill="#474747"/></svg>
<div class="a" style="left:2304.0px;top:1349.5px;font-family:'Liberation Mono', monospace;font-size:19.2px;line-height:28px;color:#1f1f1f;-webkit-text-stroke:.35px currentColor"><span style="color:#6c1a74;">[[Handler]]</span>: Object</div>
<svg class="a" style="left:2278.0px;top:1386.5px" width="14" height="12" viewBox="0 0 12 10"><path d="M1 1.2Q0 0 1.6 0H10.4Q12 0 11 1.2L6.8 8.8Q6 10 5.2 8.8Z" fill="#474747"/></svg>
<div class="a" style="left:2304.0px;top:1377.5px;font-family:'Liberation Mono', monospace;font-size:19.2px;line-height:28px;color:#1f1f1f;-webkit-text-stroke:.35px currentColor"><span style="color:#6c1a74;">[[Target]]</span>: Object</div>
<svg class="a" style="left:2302.5px;top:1412.0px" width="12" height="14" viewBox="0 0 10 12"><path d="M1.2 1Q0 0 0 1.6V10.4Q0 12 1.2 11L8.8 6.8Q10 6 8.8 5.2Z" fill="#474747"/></svg>
<div class="a" style="left:2200px;top:1400px;width:1387px;height:40px;overflow:hidden">
<div class="a" style="left:119.6px;top:5.4px;font-family:'Liberation Mono', monospace;font-size:19.2px;line-height:28px;color:#1f1f1f;-webkit-text-stroke:.35px currentColor"><span style="color:#6c1a74;font-weight:700;">configuration</span><span style="color:#1f1f1f;">: </span><span style="color:#6e6e6e;">{</span><span style="color:#1f1f1f"><span style="color:#6c1a74;">vehicle_id</span>: <span style="color:#9c2777;">'64da870e4dc2130012f96f6b'</span>, <span style="color:#6c1a74;">client_id</span>: <span style="color:#9c2777;">'4530655b-28c3-46f2-93f0-86c6d647c0de'</span>, <span style="color:#6c1a74;">client_secret</span></span></div>
</div>
<div class="a" style="left:2324.0px;top:1433.4px;font-family:'Liberation Mono', monospace;font-size:19.2px;line-height:28px;color:#1f1f1f;-webkit-text-stroke:.35px currentColor"><span style="color:#6c1a74;font-weight:700;">name</span>: <span style="color:#9c2777;">"Tronity"</span></div>
<div class="a" style="left:2324.0px;top:1461.3px;font-family:'Liberation Mono', monospace;font-size:19.2px;line-height:28px;color:#1f1f1f;-webkit-text-stroke:.35px currentColor"><span style="color:#6c1a74;font-weight:700;">type</span>: <span style="color:#9c2777;">"tronity"</span></div>
<svg class="a" style="left:2302.5px;top:1496.0px" width="12" height="14" viewBox="0 0 10 12"><path d="M1.2 1Q0 0 0 1.6V10.4Q0 12 1.2 11L8.8 6.8Q10 6 8.8 5.2Z" fill="#474747"/></svg>
<div class="a" style="left:2325.8px;top:1489.0px;font-family:'Liberation Mono', monospace;font-size:19.2px;line-height:28px;color:#1f1f1f;-webkit-text-stroke:.35px currentColor"><span style="color:#6c1a74;">[[Prototype]]</span>: Object</div>
<div class="a" style="left:2304.0px;top:1517.0px;font-family:'Liberation Mono', monospace;font-size:19.2px;line-height:28px;color:#1f1f1f;-webkit-text-stroke:.35px currentColor"><span style="color:#6c1a74;">[[IsRevoked]]</span>: <span style="color:#1a1aa6;">false</span></div>
<div class="a" style="left:2250.0px;top:1549.3px;width:1330.0px;height:1.3px;background:#dbe4f3;"></div>
<div class="a" style="left:2250.3px;top:1556.9px;font-family:'Liberation Mono', monospace;font-size:19.2px;line-height:28px;color:#1f1f1f;-webkit-text-stroke:.35px currentColor">saving data: openWB/set/vehicle/0/soc_module/interval_config</div>
<div class="a" style="left:3355.0px;top:1556.9px;font-family:'Liberation Mono', monospace;font-size:19.2px;line-height:28px;color:#1f1f1f;-webkit-text-stroke:.35px currentColor"><span style="color:#1a468a;text-decoration:underline;text-underline-offset:3px">index-27fa029b.js:1</span></div>
<svg class="a" style="left:2260.3px;top:1590.3px" width="11" height="13" viewBox="0 0 10 12"><path d="M1.2 1Q0 0 0 1.6V10.4Q0 12 1.2 11L8.8 6.8Q10 6 8.8 5.2Z" fill="#474747"/></svg>
<div class="a" style="left:2281.0px;top:1584.0px;font-family:'Liberation Mono', monospace;font-size:19.2px;line-height:28px;color:#1f1f1f;-webkit-text-stroke:.35px currentColor"><span style="color:#6e6e6e;font-style:italic;">Proxy(Object) </span><span style="color:#6e6e6e;font-style:italic;">{</span><span style="color:#6c1a74;font-style:italic;">request_interval_charging</span><span style="color:#6e6e6e;font-style:italic;">: </span><span style="color:#1a1aa6;font-style:italic;">5</span><span style="color:#6e6e6e;font-style:italic;">, </span><span style="color:#6c1a74;font-style:italic;">request_interval_not_charging</span><span style="color:#6e6e6e;font-style:italic;">: </span><span style="color:#1a1aa6;font-style:italic;">720</span><span style="color:#6e6e6e;font-style:italic;">, </span><span style="color:#6c1a74;font-style:italic;">request_only_plugged</span><span style="color:#6e6e6e;font-style:italic;">: </span><span style="color:#1a1aa6;font-style:italic;">false</span><span style="color:#6e6e6e;font-style:italic;">}</span></div>
<div class="a" style="left:2250.0px;top:1617.0px;width:1330.0px;height:1.3px;background:#dbe4f3;"></div>
<div class="a" style="left:2250.3px;top:1624.6px;font-family:'Liberation Mono', monospace;font-size:19.2px;line-height:28px;color:#1f1f1f;-webkit-text-stroke:.35px currentColor">saving data: openWB/set/vehicle/1/soc_module/interval_config</div>
<div class="a" style="left:3355.0px;top:1624.6px;font-family:'Liberation Mono', monospace;font-size:19.2px;line-height:28px;color:#1f1f1f;-webkit-text-stroke:.35px currentColor"><span style="color:#1a468a;text-decoration:underline;text-underline-offset:3px">index-27fa029b.js:1</span></div>
<svg class="a" style="left:2260.3px;top:1658.0px" width="11" height="13" viewBox="0 0 10 12"><path d="M1.2 1Q0 0 0 1.6V10.4Q0 12 1.2 11L8.8 6.8Q10 6 8.8 5.2Z" fill="#474747"/></svg>
<div class="a" style="left:2281.0px;top:1651.7px;font-family:'Liberation Mono', monospace;font-size:19.2px;line-height:28px;color:#1f1f1f;-webkit-text-stroke:.35px currentColor"><span style="color:#6e6e6e;font-style:italic;">Proxy(Object) </span><span style="color:#6e6e6e;font-style:italic;">{</span><span style="color:#6c1a74;font-style:italic;">request_interval_charging</span><span style="color:#6e6e6e;font-style:italic;">: </span><span style="color:#1a1aa6;font-style:italic;">5</span><span style="color:#6e6e6e;font-style:italic;">, </span><span style="color:#6c1a74;font-style:italic;">request_interval_not_charging</span><span style="color:#6e6e6e;font-style:italic;">: </span><span style="color:#1a1aa6;font-style:italic;">720</span><span style="color:#6e6e6e;font-style:italic;">, </span><span style="color:#6c1a74;font-style:italic;">request_only_plugged</span><span style="color:#6e6e6e;font-style:italic;">: </span><span style="color:#1a1aa6;font-style:italic;">false</span><span style="color:#6e6e6e;font-style:italic;">}</span></div>
<div class="a" style="left:2250.0px;top:1684.4px;width:1330.0px;height:1.3px;background:#dbe4f3;"></div>
<div class="a" style="left:2250.3px;top:1692.0px;font-family:'Liberation Mono', monospace;font-size:19.2px;line-height:28px;color:#1f1f1f;-webkit-text-stroke:.35px currentColor">saving data: openWB/set/vehicle/5/soc_module/interval_config</div>
<div class="a" style="left:3355.0px;top:1692.0px;font-family:'Liberation Mono', monospace;font-size:19.2px;line-height:28px;color:#1f1f1f;-webkit-text-stroke:.35px currentColor"><span style="color:#1a468a;text-decoration:underline;text-underline-offset:3px">index-27fa029b.js:1</span></div>
<svg class="a" style="left:2260.3px;top:1725.4px" width="11" height="13" viewBox="0 0 10 12"><path d="M1.2 1Q0 0 0 1.6V10.4Q0 12 1.2 11L8.8 6.8Q10 6 8.8 5.2Z" fill="#474747"/></svg>
<div class="a" style="left:2281.0px;top:1719.1px;font-family:'Liberation Mono', monospace;font-size:19.2px;line-height:28px;color:#1f1f1f;-webkit-text-stroke:.35px currentColor"><span style="color:#6e6e6e;font-style:italic;">Proxy(Object) </span><span style="color:#6e6e6e;font-style:italic;">{</span><span style="color:#6c1a74;font-style:italic;">request_interval_charging</span><span style="color:#6e6e6e;font-style:italic;">: </span><span style="color:#1a1aa6;font-style:italic;">5</span><span style="color:#6e6e6e;font-style:italic;">, </span><span style="color:#6c1a74;font-style:italic;">request_interval_not_charging</span><span style="color:#6e6e6e;font-style:italic;">: </span><span style="color:#1a1aa6;font-style:italic;">720</span><span style="color:#6e6e6e;font-style:italic;">, </span><span style="color:#6c1a74;font-style:italic;">request_only_plugged</span><span style="color:#6e6e6e;font-style:italic;">: </span><span style="color:#1a1aa6;font-style:italic;">false</span><span style="color:#6e6e6e;font-style:italic;">}</span></div>
<div class="a" style="left:2250.0px;top:1752.0px;width:1330.0px;height:1.3px;background:#dbe4f3;"></div>
<svg class="a" style="left:0;top:0;mix-blend-mode:multiply" width="3608" height="1727"><path d="M2401 1290 L2840 1288.7 L2840 1316 L3185.5 1315.8 L3185.5 1346.7 L2440.7 1348.6 L2440.7 1319 L2401 1319 Z" fill="#ffe600"/><path d="M2496.5 1413 Q2620 1408 2751.7 1403.3 Q2800 1397 2848.8 1396.5 L3054 1391 Q3300 1394 3591 1404.5 L3591 1435.5 Q3300 1432 3132 1431.8 Q3000 1427 2980 1426.6 Q2850 1428 2771 1432.4 Q2700 1440 2674 1440 L2496.5 1442 Z" fill="#ffe600"/></svg>
<div class="a" style="left:3591.0px;top:0.0px;width:17.0px;height:1727.0px;background:#000;"></div>
<svg class="a" style="left:3591px;top:1404.7px" width="17" height="31"><rect width="17" height="31" fill="#ffe600"/></svg>
</body></html>
